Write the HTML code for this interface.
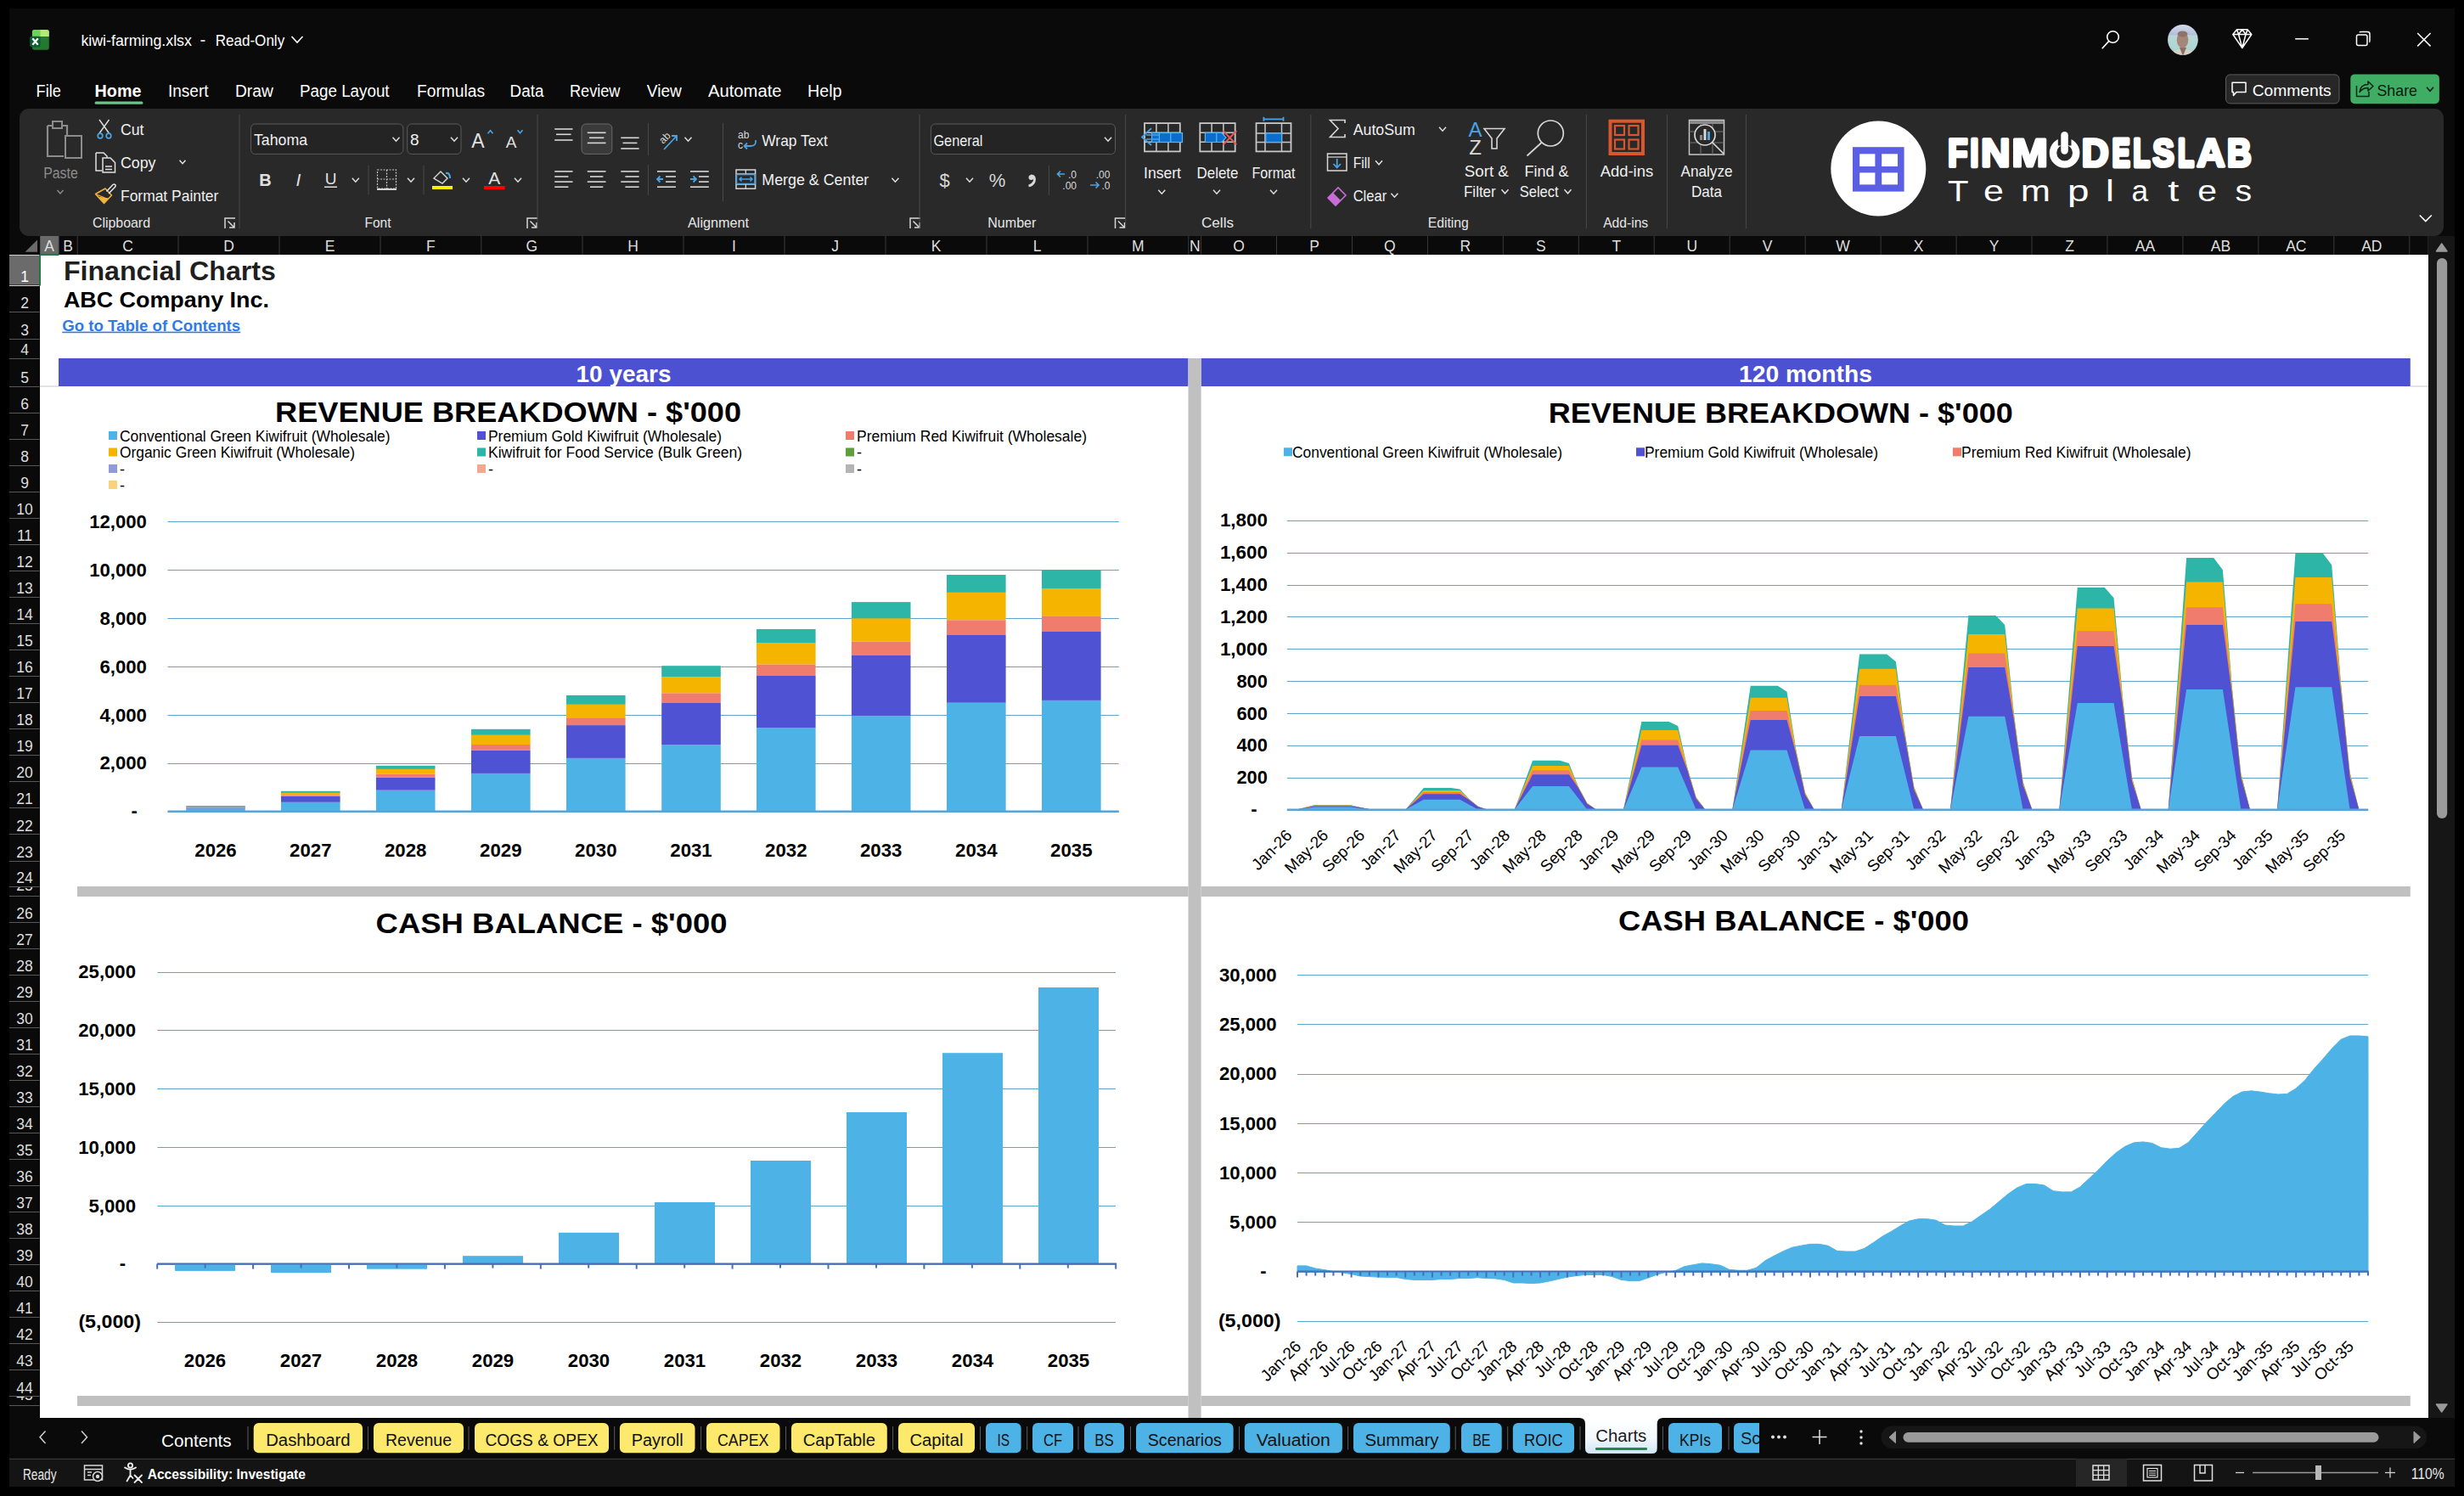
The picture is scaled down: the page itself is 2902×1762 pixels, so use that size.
<!DOCTYPE html>
<html><head><meta charset="utf-8"><title>kiwi-farming.xlsx - Charts</title>
<style>
html,body{margin:0;padding:0;background:#000;}
body{width:2902px;height:1762px;overflow:hidden;position:relative;font-family:"Liberation Sans",sans-serif;}
.blk{position:absolute;}
svg{position:absolute;left:0;top:0;}
text{font-family:"Liberation Sans",sans-serif;}
</style></head>
<body>
<div class="blk" style="left:11px;top:10px;width:2880px;height:1741px;background:#0a0a0a"></div>
<div class="blk" style="left:47px;top:300px;width:2813px;height:1370px;background:#ffffff"></div>
<svg width="2902" height="1762" viewBox="0 0 2902 1762">
<defs><clipPath id="xl"><rect x="37.9" y="34.9" width="19.9" height="23.8" rx="2.6"/></clipPath></defs>
<g clip-path="url(#xl)"><rect x="37" y="34" width="22" height="26" fill="#24782F"/><rect x="37" y="34" width="11" height="9" fill="#6CD35C"/><rect x="47.5" y="34" width="11" height="9" fill="#B6E874"/></g>
<rect x="35.2" y="42.7" width="12.4" height="12.7" fill="#0E5C33" rx="1.8"/>
<path d="M38.3,45.2 L44.8,52.8 M44.8,45.2 L38.3,52.8" stroke="#f4fff6" stroke-width="2.3"/>
<text x="95.4" y="54.4" font-size="18.5" fill="#ffffff" textLength="130.5" lengthAdjust="spacingAndGlyphs">kiwi-farming.xlsx</text>
<rect x="236.4" y="47.2" width="5.1" height="1.6" fill="#ffffff"/>
<text x="253.7" y="54.4" font-size="18.5" fill="#ffffff" textLength="81.5" lengthAdjust="spacingAndGlyphs">Read-Only</text>
<polyline points="343.5,43.0 350.0,50.0 356.5,43.0" fill="none" stroke="#ffffff" stroke-width="1.6"/>
<circle cx="2488.5" cy="43.5" r="6.8" fill="none" stroke="#ffffff" stroke-width="1.6"/>
<line x1="2483.6" y1="48.6" x2="2475.7" y2="57.2" stroke="#ffffff" stroke-width="1.6"/>
<defs><clipPath id="av"><circle cx="2570.9" cy="46.9" r="17.9"/></clipPath><linearGradient id="avg" x1="0" y1="0" x2="0" y2="1"><stop offset="0" stop-color="#d6dbea"/><stop offset="0.33" stop-color="#b3c0dc"/><stop offset="0.38" stop-color="#b9d8d8"/><stop offset="1" stop-color="#a6d2cc"/></linearGradient></defs>
<g clip-path="url(#av)"><rect x="2552" y="28" width="38" height="38" fill="url(#avg)"/><ellipse cx="2571" cy="68" rx="17" ry="10" fill="#d9d0c6"/><path d="M2567,56 L2571,66 L2575,56 Z" fill="#8c6f64"/><ellipse cx="2570.5" cy="47" rx="6.8" ry="9.5" fill="#a5877a"/><ellipse cx="2570.5" cy="40" rx="6" ry="3.5" fill="#8e7468"/></g>
<path d="M2629.8,40.5 L2634.5,34.8 H2647 L2651.8,40.5 L2640.8,56.5 Z M2629.8,40.5 H2651.8 M2636.5,40.5 L2640.8,56.5 L2645,40.5 M2634.5,34.8 L2636.5,40.5 L2640.8,34.8 L2645,40.5 L2647,34.8" fill="none" stroke="#ffffff" stroke-width="1.5" stroke-linejoin="round"/>
<line x1="2703.2" y1="45.8" x2="2718.8" y2="45.8" stroke="#ffffff" stroke-width="1.5"/>
<rect x="2775.5" y="41" width="12.5" height="12.5" rx="2" fill="none" stroke="#ffffff" stroke-width="1.5"/><path d="M2779,38.2 Q2779,37.5 2781,37.5 H2788.5 Q2791,37.5 2791,40 V47.5 Q2791,49.5 2790.3,49.5" fill="none" stroke="#ffffff" stroke-width="1.5"/>
<line x1="2847.2" y1="39.0" x2="2862.6" y2="54.4" stroke="#ffffff" stroke-width="1.5"/>
<line x1="2862.6" y1="39.0" x2="2847.2" y2="54.4" stroke="#ffffff" stroke-width="1.5"/>
<rect x="2621.5" y="87.9" width="133.5" height="34" rx="5" fill="#272727" stroke="#5c5c5c" stroke-width="1"/>
<path d="M2629,97.3 H2645 V108.5 H2634 L2630.5,112.5 V108.5 H2629 Z" fill="none" stroke="#ffffff" stroke-width="1.5" stroke-linejoin="round"/>
<text x="2652.7" y="113.0" font-size="19" fill="#ffffff" textLength="93.0" lengthAdjust="spacingAndGlyphs">Comments</text>
<rect x="2768.3" y="87.4" width="104.6" height="34.9" rx="5" fill="#3FAE64"/>
<path d="M2775.5,101 V113.5 H2790 V108 M2779,108.5 Q2780,99.5 2789,99.5 V96 L2795,101.5 L2789,107 V103.5 Q2782.5,103.5 2779,108.5 Z" fill="none" stroke="#0c2414" stroke-width="1.5" stroke-linejoin="round"/>
<text x="2799.5" y="113.0" font-size="19" fill="#0c1a10" textLength="47.5" lengthAdjust="spacingAndGlyphs">Share</text>
<polyline points="2858.0,102.8 2862.0,107.2 2866.0,102.8" fill="none" stroke="#0c1a10" stroke-width="1.6"/>
<text x="42.6" y="113.6" font-size="19.5" fill="#ffffff" textLength="29.2" lengthAdjust="spacingAndGlyphs">File</text>
<text x="111.6" y="113.6" font-size="19.5" font-weight="bold" fill="#ffffff" textLength="54.8" lengthAdjust="spacingAndGlyphs">Home</text>
<text x="198.0" y="113.6" font-size="19.5" fill="#ffffff" textLength="47.5" lengthAdjust="spacingAndGlyphs">Insert</text>
<text x="277.0" y="113.6" font-size="19.5" fill="#ffffff" textLength="44.8" lengthAdjust="spacingAndGlyphs">Draw</text>
<text x="353.0" y="113.6" font-size="19.5" fill="#ffffff" textLength="105.6" lengthAdjust="spacingAndGlyphs">Page Layout</text>
<text x="491.0" y="113.6" font-size="19.5" fill="#ffffff" textLength="80.0" lengthAdjust="spacingAndGlyphs">Formulas</text>
<text x="600.6" y="113.6" font-size="19.5" fill="#ffffff" textLength="39.8" lengthAdjust="spacingAndGlyphs">Data</text>
<text x="670.9" y="113.6" font-size="19.5" fill="#ffffff" textLength="59.6" lengthAdjust="spacingAndGlyphs">Review</text>
<text x="761.8" y="113.6" font-size="19.5" fill="#ffffff" textLength="41.0" lengthAdjust="spacingAndGlyphs">View</text>
<text x="834.0" y="113.6" font-size="19.5" fill="#ffffff" textLength="86.5" lengthAdjust="spacingAndGlyphs">Automate</text>
<text x="951.0" y="113.6" font-size="19.5" fill="#ffffff" textLength="40.5" lengthAdjust="spacingAndGlyphs">Help</text>
<rect x="111.6" y="119.5" width="56.8" height="3.3" fill="#6BC48A" rx="1.5"/>
<rect x="23" y="128" width="2855" height="150" rx="11" fill="#292929"/>
<path d="M56,148 H62 M73,148 H79 V160" fill="none" stroke="#8c8c8c" stroke-width="2.2"/><path d="M56,148 V184 H75" fill="none" stroke="#8c8c8c" stroke-width="2.2"/><path d="M62,143 H73 V151 H62 Z" fill="none" stroke="#8c8c8c" stroke-width="2"/><rect x="77" y="160" width="19" height="26" fill="#292929" stroke="#8c8c8c" stroke-width="2"/>
<text x="71.5" y="209.8" font-size="18" fill="#8c8c8c" text-anchor="middle" textLength="40.6" lengthAdjust="spacingAndGlyphs">Paste</text>
<polyline points="67.5,224.0 71.0,228.0 74.5,224.0" fill="none" stroke="#8c8c8c" stroke-width="1.4"/>
<path d="M117,141 L128.5,157 M128.5,141 L117,157" stroke="#e0e0e0" stroke-width="1.4" fill="none"/><circle cx="118" cy="160" r="2.8" fill="none" stroke="#4BA3E3" stroke-width="1.7"/><circle cx="128" cy="160" r="2.8" fill="none" stroke="#4BA3E3" stroke-width="1.7"/>
<text x="142.0" y="159.3" font-size="18.5" fill="#f0f0f0" textLength="27.5" lengthAdjust="spacingAndGlyphs">Cut</text>
<path d="M113,180 H122 L126,184 V188 M113,180 V201 H120" fill="none" stroke="#e0e0e0" stroke-width="1.5"/><path d="M121,186 H130 L135.5,191.5 V203 H121 Z M124,196 H132 M124,199.5 H132" fill="#292929" stroke="#e0e0e0" stroke-width="1.5"/>
<text x="142.0" y="197.8" font-size="18.5" fill="#f0f0f0" textLength="41.5" lengthAdjust="spacingAndGlyphs">Copy</text>
<polyline points="211.5,188.7 215.0,192.7 218.5,188.7" fill="none" stroke="#e0e0e0" stroke-width="1.5"/>
<path d="M112.5,228.5 L124,222 L131.5,230 L122.5,239.5 Z" fill="none" stroke="#F2B33D" stroke-width="1.5" stroke-linejoin="round"/><path d="M115,231.5 L128.5,233.5 L122.5,239.5 Z" fill="#F2B33D"/><path d="M113.5,229 L123.5,233" stroke="#F2B33D" stroke-width="1.2"/><path d="M125.5,225.5 L133,217.5 Q134.5,216.3 135.7,217.6 Q136.8,218.8 135.5,220.2 L128,228" fill="none" stroke="#e6e6e6" stroke-width="1.5" stroke-linejoin="round"/>
<text x="142.0" y="237.0" font-size="18.5" fill="#f0f0f0" textLength="115.3" lengthAdjust="spacingAndGlyphs">Format Painter</text>
<text x="143.0" y="268.3" font-size="17" fill="#e6e6e6" text-anchor="middle" textLength="68.0" lengthAdjust="spacingAndGlyphs">Clipboard</text>
<path d="M265,269 V257 H277" fill="none" stroke="#d8d8d8" stroke-width="1.5"/><path d="M268.5,260.5 L276,268 M276,262 V268 H270" fill="none" stroke="#d8d8d8" stroke-width="1.5"/>
<line x1="282.0" y1="135.0" x2="282.0" y2="269.0" stroke="#4a4a4a" stroke-width="1"/>
<rect x="295.5" y="146" width="179.3" height="35.4" rx="5" fill="#242424" stroke="#5a5a5a" stroke-width="1"/>
<text x="299.0" y="171.0" font-size="19" fill="#f0f0f0" textLength="63.0" lengthAdjust="spacingAndGlyphs">Tahoma</text>
<polyline points="462.5,161.8 466.5,166.2 470.5,161.8" fill="none" stroke="#e0e0e0" stroke-width="1.5"/>
<rect x="479.7" y="146" width="63.3" height="35.4" rx="5" fill="#242424" stroke="#5a5a5a" stroke-width="1"/>
<text x="483.0" y="171.0" font-size="19" fill="#f0f0f0">8</text>
<polyline points="531.0,161.8 535.0,166.2 539.0,161.8" fill="none" stroke="#e0e0e0" stroke-width="1.5"/>
<text x="563.0" y="174.0" font-size="23" fill="#e0e0e0" text-anchor="middle">A</text>
<polyline points="574.5,157.2 577.5,153.8 580.5,157.2" fill="none" stroke="#4BA3E3" stroke-width="1.6"/>
<text x="602.0" y="174.0" font-size="19" fill="#e0e0e0" text-anchor="middle">A</text>
<polyline points="609.5,153.2 612.5,156.8 615.5,153.2" fill="none" stroke="#4BA3E3" stroke-width="1.6"/>
<text x="312.5" y="219.0" font-size="20" font-weight="bold" fill="#e0e0e0" text-anchor="middle">B</text>
<text x="351.5" y="219.0" font-size="21" fill="#e0e0e0" text-anchor="middle" font-style="italic" font-family="Liberation Serif">I</text>
<text x="389.6" y="217.0" font-size="19" fill="#e0e0e0" text-anchor="middle">U</text>
<rect x="382.0" y="219.5" width="15.0" height="1.5" fill="#e0e0e0"/>
<polyline points="414.8,209.8 418.8,214.2 422.8,209.8" fill="none" stroke="#e0e0e0" stroke-width="1.5"/>
<line x1="434.0" y1="195.0" x2="434.0" y2="229.0" stroke="#4a4a4a" stroke-width="1"/>
<rect x="444.5" y="200" width="22" height="22" fill="none" stroke="#c8c8c8" stroke-width="1.2" stroke-dasharray="2,1.5"/><path d="M455.5,200 V222 M444.5,211 H466.5" stroke="#c8c8c8" stroke-width="1.2" stroke-dasharray="2,1.5"/><path d="M444,223 H467" stroke="#e8e8e8" stroke-width="1.8"/>
<polyline points="480.0,209.8 484.0,214.2 488.0,209.8" fill="none" stroke="#e0e0e0" stroke-width="1.5"/>
<line x1="499.0" y1="195.0" x2="499.0" y2="229.0" stroke="#4a4a4a" stroke-width="1"/>
<path d="M511,210 L519,202 L527,210 L521,216 Z" fill="none" stroke="#d8d8d8" stroke-width="1.4"/><path d="M525,204 Q530,203 530,210" fill="none" stroke="#4BA3E3" stroke-width="2"/>
<rect x="509.0" y="219.0" width="24.0" height="4.0" fill="#FFF200"/>
<polyline points="545.0,209.8 549.0,214.2 553.0,209.8" fill="none" stroke="#e0e0e0" stroke-width="1.5"/>
<text x="582.3" y="217.0" font-size="21" fill="#e0e0e0" text-anchor="middle">A</text>
<rect x="570.0" y="219.0" width="24.6" height="4.0" fill="#FF0000"/>
<polyline points="606.0,209.8 610.0,214.2 614.0,209.8" fill="none" stroke="#e0e0e0" stroke-width="1.5"/>
<text x="445.0" y="268.3" font-size="17" fill="#e6e6e6" text-anchor="middle" textLength="31.0" lengthAdjust="spacingAndGlyphs">Font</text>
<path d="M621,269 V257 H633" fill="none" stroke="#d8d8d8" stroke-width="1.5"/><path d="M624.5,260.5 L632,268 M632,262 V268 H626" fill="none" stroke="#d8d8d8" stroke-width="1.5"/>
<line x1="633.0" y1="135.0" x2="633.0" y2="269.0" stroke="#4a4a4a" stroke-width="1"/>
<line x1="653.2" y1="152.0" x2="674.5" y2="152.0" stroke="#d8d8d8" stroke-width="1.6"/><line x1="655.0" y1="158.3" x2="672.5" y2="158.3" stroke="#d8d8d8" stroke-width="1.6"/><line x1="653.2" y1="165.0" x2="674.5" y2="165.0" stroke="#d8d8d8" stroke-width="1.6"/>
<rect x="685" y="146" width="35.8" height="35.4" rx="5" fill="#3a3a3a" stroke="#6a6a6a" stroke-width="1"/>
<line x1="691.8" y1="156.3" x2="713.5" y2="156.3" stroke="#d8d8d8" stroke-width="1.6"/><line x1="694.0" y1="162.3" x2="711.3" y2="162.3" stroke="#d8d8d8" stroke-width="1.6"/><line x1="691.8" y1="168.4" x2="713.5" y2="168.4" stroke="#d8d8d8" stroke-width="1.6"/>
<line x1="731.3" y1="162.3" x2="752.6" y2="162.3" stroke="#d8d8d8" stroke-width="1.6"/><line x1="733.5" y1="168.4" x2="750.4" y2="168.4" stroke="#d8d8d8" stroke-width="1.6"/><line x1="731.3" y1="175.0" x2="752.6" y2="175.0" stroke="#d8d8d8" stroke-width="1.6"/>
<line x1="763.4" y1="145.0" x2="763.4" y2="183.0" stroke="#4a4a4a" stroke-width="1"/>
<text x="781" y="170" font-size="12" fill="#d8d8d8" transform="rotate(-45 781 170)">ab</text><path d="M782,176 L797,160 M791,160 H797 V166" fill="none" stroke="#4BA3E3" stroke-width="1.8"/>
<polyline points="806.5,161.8 810.5,166.2 814.5,161.8" fill="none" stroke="#e0e0e0" stroke-width="1.5"/>
<line x1="851.5" y1="145.0" x2="851.5" y2="237.0" stroke="#4a4a4a" stroke-width="1"/>
<text x="869" y="163" font-size="12" fill="#d8d8d8">ab</text><text x="869" y="175" font-size="12" fill="#d8d8d8">c</text><path d="M890,165 Q891,172 884,172 H877 M880,168.5 L876.5,172 L880,175.5" fill="none" stroke="#4BA3E3" stroke-width="1.8"/>
<text x="897.3" y="171.5" font-size="19" fill="#f0f0f0" textLength="77.5" lengthAdjust="spacingAndGlyphs">Wrap Text</text>
<line x1="653.2" y1="201.9" x2="674.5" y2="201.9" stroke="#d8d8d8" stroke-width="1.6"/><line x1="653.2" y1="208.0" x2="669.4" y2="208.0" stroke="#d8d8d8" stroke-width="1.6"/><line x1="653.2" y1="214.1" x2="674.5" y2="214.1" stroke="#d8d8d8" stroke-width="1.6"/><line x1="653.2" y1="220.2" x2="669.4" y2="220.2" stroke="#d8d8d8" stroke-width="1.6"/>
<line x1="691.8" y1="201.9" x2="713.5" y2="201.9" stroke="#d8d8d8" stroke-width="1.6"/><line x1="695.0" y1="208.0" x2="710.3" y2="208.0" stroke="#d8d8d8" stroke-width="1.6"/><line x1="691.8" y1="214.1" x2="713.5" y2="214.1" stroke="#d8d8d8" stroke-width="1.6"/><line x1="695.0" y1="220.2" x2="710.3" y2="220.2" stroke="#d8d8d8" stroke-width="1.6"/>
<line x1="731.3" y1="201.9" x2="752.6" y2="201.9" stroke="#d8d8d8" stroke-width="1.6"/><line x1="736.4" y1="208.0" x2="752.6" y2="208.0" stroke="#d8d8d8" stroke-width="1.6"/><line x1="731.3" y1="214.1" x2="752.6" y2="214.1" stroke="#d8d8d8" stroke-width="1.6"/><line x1="736.4" y1="220.2" x2="752.6" y2="220.2" stroke="#d8d8d8" stroke-width="1.6"/>
<line x1="763.4" y1="194.0" x2="763.4" y2="230.0" stroke="#4a4a4a" stroke-width="1"/>
<line x1="774.0" y1="201.9" x2="795.9" y2="201.9" stroke="#d8d8d8" stroke-width="1.6"/><line x1="784.0" y1="208.0" x2="795.9" y2="208.0" stroke="#d8d8d8" stroke-width="1.6"/><line x1="784.0" y1="214.1" x2="795.9" y2="214.1" stroke="#d8d8d8" stroke-width="1.6"/><line x1="774.0" y1="220.2" x2="795.9" y2="220.2" stroke="#d8d8d8" stroke-width="1.6"/>
<path d="M781,211 H774 M777.5,207.5 L774,211 L777.5,214.5" fill="none" stroke="#4BA3E3" stroke-width="1.8"/>
<line x1="813.0" y1="201.9" x2="834.8" y2="201.9" stroke="#d8d8d8" stroke-width="1.6"/><line x1="823.0" y1="208.0" x2="834.8" y2="208.0" stroke="#d8d8d8" stroke-width="1.6"/><line x1="823.0" y1="214.1" x2="834.8" y2="214.1" stroke="#d8d8d8" stroke-width="1.6"/><line x1="813.0" y1="220.2" x2="834.8" y2="220.2" stroke="#d8d8d8" stroke-width="1.6"/>
<path d="M813,211 H820 M816.5,207.5 L820,211 L816.5,214.5" fill="none" stroke="#4BA3E3" stroke-width="1.8"/>
<rect x="867" y="200" width="22.6" height="22.2" fill="none" stroke="#d8d8d8" stroke-width="1.5"/><path d="M867,205 H889.6 M867,217 H889.6 M878.3,200 V205 M878.3,217 V222" stroke="#d8d8d8" stroke-width="1.3"/><rect x="867.5" y="205.5" width="21.6" height="11" fill="none" stroke="#4BA3E3" stroke-width="1.6"/><path d="M871,211 H886 M873.5,208.5 L871,211 L873.5,213.5 M883.5,208.5 L886,211 L883.5,213.5" fill="none" stroke="#4BA3E3" stroke-width="1.5"/>
<text x="897.3" y="218.0" font-size="19" fill="#f0f0f0" textLength="126.0" lengthAdjust="spacingAndGlyphs">Merge &amp; Center</text>
<polyline points="1050.4,209.8 1054.4,214.2 1058.4,209.8" fill="none" stroke="#e0e0e0" stroke-width="1.5"/>
<text x="846.0" y="268.3" font-size="17" fill="#e6e6e6" text-anchor="middle" textLength="72.0" lengthAdjust="spacingAndGlyphs">Alignment</text>
<path d="M1072,269 V257 H1084" fill="none" stroke="#d8d8d8" stroke-width="1.5"/><path d="M1075.5,260.5 L1083,268 M1083,262 V268 H1077" fill="none" stroke="#d8d8d8" stroke-width="1.5"/>
<line x1="1083.0" y1="135.0" x2="1083.0" y2="269.0" stroke="#4a4a4a" stroke-width="1"/>
<rect x="1096.4" y="146" width="217.1" height="35.6" rx="5" fill="#242424" stroke="#5a5a5a" stroke-width="1"/>
<text x="1099.4" y="171.5" font-size="19" fill="#f0f0f0" textLength="58.0" lengthAdjust="spacingAndGlyphs">General</text>
<polyline points="1301.0,161.8 1305.0,166.2 1309.0,161.8" fill="none" stroke="#e0e0e0" stroke-width="1.5"/>
<text x="1112.6" y="220.0" font-size="22" fill="#d8d8d8" text-anchor="middle">$</text>
<polyline points="1138.0,209.8 1142.0,214.2 1146.0,209.8" fill="none" stroke="#e0e0e0" stroke-width="1.5"/>
<text x="1174.5" y="220.0" font-size="22" fill="#d8d8d8" text-anchor="middle">%</text>
<path d="M1214,207 Q1220,207 1218,214 Q1216,218 1211.5,219" fill="none" stroke="#d8d8d8" stroke-width="2.8"/><circle cx="1214.5" cy="209" r="3" fill="#d8d8d8"/>
<line x1="1235.4" y1="195.0" x2="1235.4" y2="230.0" stroke="#4a4a4a" stroke-width="1"/>
<text x="1268" y="210" font-size="12" fill="#d8d8d8" text-anchor="end">.0</text><text x="1268" y="223" font-size="12" fill="#d8d8d8" text-anchor="end">.00</text><path d="M1254,205 H1245.5 M1249,201.5 L1245.5,205 L1249,208.5" fill="none" stroke="#4BA3E3" stroke-width="1.7"/>
<text x="1307.4" y="210" font-size="12" fill="#d8d8d8" text-anchor="end">.00</text><text x="1307.4" y="223" font-size="12" fill="#d8d8d8" text-anchor="end">.0</text><path d="M1284,218 H1294 M1290.5,214.5 L1294,218 L1290.5,221.5" fill="none" stroke="#4BA3E3" stroke-width="1.7"/>
<text x="1191.8" y="268.3" font-size="17" fill="#e6e6e6" text-anchor="middle" textLength="57.0" lengthAdjust="spacingAndGlyphs">Number</text>
<path d="M1313.5,269 V257 H1325.5" fill="none" stroke="#d8d8d8" stroke-width="1.5"/><path d="M1317.0,260.5 L1324.5,268 M1324.5,262 V268 H1318.5" fill="none" stroke="#d8d8d8" stroke-width="1.5"/>
<line x1="1325.7" y1="135.0" x2="1325.7" y2="269.0" stroke="#4a4a4a" stroke-width="1"/>
<rect x="1348" y="145.1" width="41.8" height="33.3" fill="none" stroke="#c8c8c8" stroke-width="1.8"/><line x1="1361.9" y1="145.1" x2="1361.9" y2="178.4" stroke="#c8c8c8" stroke-width="1.5"/><line x1="1348.0" y1="156.2" x2="1389.8" y2="156.2" stroke="#c8c8c8" stroke-width="1.5"/><line x1="1375.9" y1="145.1" x2="1375.9" y2="178.4" stroke="#c8c8c8" stroke-width="1.5"/><line x1="1348.0" y1="167.3" x2="1389.8" y2="167.3" stroke="#c8c8c8" stroke-width="1.5"/>
<rect x="1356.5" y="156.5" width="36" height="11" fill="#0B6ECF" stroke="#5AB4F0" stroke-width="1.2"/>
<line x1="1365.4" y1="156.5" x2="1365.4" y2="167.5" stroke="#5AB4F0" stroke-width="1.2"/><line x1="1378.8" y1="156.5" x2="1378.8" y2="167.5" stroke="#5AB4F0" stroke-width="1.2"/>
<path d="M1365,159 H1350 M1365,164 H1350" stroke="#4BA3E3" stroke-width="1.3"/><path d="M1356,151.2 L1345,161.5 L1356,171" fill="none" stroke="#4BA3E3" stroke-width="1.8"/>
<text x="1369.0" y="209.6" font-size="19" fill="#f0f0f0" text-anchor="middle" textLength="44.0" lengthAdjust="spacingAndGlyphs">Insert</text>
<polyline points="1364.3,223.8 1368.3,228.2 1372.3,223.8" fill="none" stroke="#e0e0e0" stroke-width="1.5"/>
<rect x="1413.3" y="145.1" width="41.4" height="33.3" fill="none" stroke="#c8c8c8" stroke-width="1.8"/><line x1="1427.1" y1="145.1" x2="1427.1" y2="178.4" stroke="#c8c8c8" stroke-width="1.5"/><line x1="1413.3" y1="156.2" x2="1454.7" y2="156.2" stroke="#c8c8c8" stroke-width="1.5"/><line x1="1440.9" y1="145.1" x2="1440.9" y2="178.4" stroke="#c8c8c8" stroke-width="1.5"/><line x1="1413.3" y1="167.3" x2="1454.7" y2="167.3" stroke="#c8c8c8" stroke-width="1.5"/>
<path d="M1419.4,156.5 H1439 L1444,162 L1439,167.5 H1419.4 Z" fill="#0B6ECF" stroke="#5AB4F0" stroke-width="1.2"/>
<line x1="1432.8" y1="156.5" x2="1432.8" y2="167.5" stroke="#5AB4F0" stroke-width="1.2"/>
<path d="M1440.5,154 L1456.3,170.5 M1456.3,154 L1440.5,170.5" stroke="#E05A5A" stroke-width="2"/>
<text x="1434.0" y="209.6" font-size="19" fill="#f0f0f0" text-anchor="middle" textLength="49.0" lengthAdjust="spacingAndGlyphs">Delete</text>
<polyline points="1429.0,223.8 1433.0,228.2 1437.0,223.8" fill="none" stroke="#e0e0e0" stroke-width="1.5"/>
<rect x="1479.5" y="145.1" width="41" height="33.3" fill="none" stroke="#c8c8c8" stroke-width="1.8"/><line x1="1490.0" y1="145.1" x2="1490.0" y2="178.4" stroke="#c8c8c8" stroke-width="1.5"/><line x1="1509.5" y1="145.1" x2="1509.5" y2="178.4" stroke="#c8c8c8" stroke-width="1.5"/><line x1="1479.5" y1="156.9" x2="1520.5" y2="156.9" stroke="#c8c8c8" stroke-width="1.5"/><line x1="1479.5" y1="167.5" x2="1520.5" y2="167.5" stroke="#c8c8c8" stroke-width="1.5"/>
<rect x="1490.8" y="157" width="18.7" height="10.5" fill="#0B6ECF" stroke="#5AB4F0" stroke-width="1.2"/>
<path d="M1488.4,140.3 H1511.5 M1488.4,137.8 V142.7 M1511.5,137.8 V142.7" stroke="#4BA3E3" stroke-width="1.8"/>
<text x="1500.0" y="209.6" font-size="19" fill="#f0f0f0" text-anchor="middle" textLength="51.0" lengthAdjust="spacingAndGlyphs">Format</text>
<polyline points="1496.0,223.8 1500.0,228.2 1504.0,223.8" fill="none" stroke="#e0e0e0" stroke-width="1.5"/>
<text x="1434.0" y="268.3" font-size="17" fill="#e6e6e6" text-anchor="middle" textLength="38.0" lengthAdjust="spacingAndGlyphs">Cells</text>
<line x1="1543.8" y1="135.0" x2="1543.8" y2="269.0" stroke="#4a4a4a" stroke-width="1"/>
<path d="M1584,145 V141.5 H1566.5 L1576,151.5 L1566.5,161.5 H1584 V158" fill="none" stroke="#d8d8d8" stroke-width="1.6"/>
<text x="1593.7" y="159.3" font-size="18.5" fill="#f0f0f0" textLength="73.0" lengthAdjust="spacingAndGlyphs">AutoSum</text>
<polyline points="1695.0,149.8 1699.0,154.2 1703.0,149.8" fill="none" stroke="#e0e0e0" stroke-width="1.5"/>
<rect x="1563.5" y="181" width="22.5" height="20" fill="none" stroke="#d8d8d8" stroke-width="1.5"/><path d="M1563.5,185 H1586" stroke="#d8d8d8" stroke-width="1.2"/><path d="M1574.7,187 V197 M1570.5,193 L1574.7,197.5 L1579,193" fill="none" stroke="#4BA3E3" stroke-width="1.8"/>
<text x="1593.7" y="197.8" font-size="18.5" fill="#f0f0f0" textLength="20.0" lengthAdjust="spacingAndGlyphs">Fill</text>
<polyline points="1620.0,189.2 1624.0,193.8 1628.0,189.2" fill="none" stroke="#e0e0e0" stroke-width="1.5"/>
<path d="M1564,233 L1576,221 L1585,230 L1573,242 Z" fill="none" stroke="#C86DD7" stroke-width="1.6"/><path d="M1564,233 L1570,227 L1579,236 L1573,242 Z" fill="#C86DD7"/>
<text x="1593.7" y="236.5" font-size="18.5" fill="#f0f0f0" textLength="39.5" lengthAdjust="spacingAndGlyphs">Clear</text>
<polyline points="1638.4,227.8 1642.4,232.2 1646.4,227.8" fill="none" stroke="#e0e0e0" stroke-width="1.5"/>
<text x="1737.5" y="161.0" font-size="24" fill="#4BA3E3" text-anchor="middle">A</text>
<text x="1737.5" y="181.5" font-size="24" fill="#d8d8d8" text-anchor="middle">Z</text>
<path d="M1748,151.5 H1772 L1763,163 V175 H1757 V163 Z" fill="none" stroke="#d8d8d8" stroke-width="1.6"/>
<text x="1750.8" y="207.5" font-size="18.5" fill="#f0f0f0" text-anchor="middle" textLength="52.0" lengthAdjust="spacingAndGlyphs">Sort &amp;</text>
<text x="1724.0" y="232.0" font-size="18.5" fill="#f0f0f0" textLength="37.7" lengthAdjust="spacingAndGlyphs">Filter</text>
<polyline points="1768.5,223.2 1772.5,227.8 1776.5,223.2" fill="none" stroke="#e0e0e0" stroke-width="1.5"/>
<circle cx="1826.3" cy="157" r="15" fill="none" stroke="#d8d8d8" stroke-width="1.7"/><path d="M1815.5,168 L1798.5,183.5" stroke="#d8d8d8" stroke-width="1.7"/>
<text x="1821.4" y="207.5" font-size="18.5" fill="#f0f0f0" text-anchor="middle" textLength="52.0" lengthAdjust="spacingAndGlyphs">Find &amp;</text>
<text x="1789.7" y="232.0" font-size="18.5" fill="#f0f0f0" textLength="46.0" lengthAdjust="spacingAndGlyphs">Select</text>
<polyline points="1842.5,223.2 1846.5,227.8 1850.5,223.2" fill="none" stroke="#e0e0e0" stroke-width="1.5"/>
<text x="1705.7" y="268.3" font-size="17" fill="#e6e6e6" text-anchor="middle" textLength="48.0" lengthAdjust="spacingAndGlyphs">Editing</text>
<line x1="1868.4" y1="135.0" x2="1868.4" y2="269.0" stroke="#4a4a4a" stroke-width="1"/>
<rect x="1896.5" y="142.7" width="38.5" height="38.3" fill="none" stroke="#D9562E" stroke-width="4"/><rect x="1902" y="148" width="11" height="11" fill="none" stroke="#D9562E" stroke-width="2.2"/><rect x="1918.5" y="148" width="11" height="11" fill="none" stroke="#D9562E" stroke-width="2.2"/><rect x="1902" y="164.5" width="11" height="11" fill="none" stroke="#D9562E" stroke-width="2.2"/><rect x="1918.5" y="164.5" width="11" height="11" fill="none" stroke="#D9562E" stroke-width="2.2"/>
<text x="1915.9" y="208.0" font-size="18.5" fill="#f0f0f0" text-anchor="middle" textLength="62.5" lengthAdjust="spacingAndGlyphs">Add-ins</text>
<text x="1914.7" y="268.3" font-size="17" fill="#e6e6e6" text-anchor="middle" textLength="53.0" lengthAdjust="spacingAndGlyphs">Add-ins</text>
<line x1="1963.4" y1="135.0" x2="1963.4" y2="269.0" stroke="#4a4a4a" stroke-width="1"/>
<rect x="1989.5" y="141.5" width="41" height="40.5" fill="none" stroke="#c8c8c8" stroke-width="1.5"/><rect x="1990" y="142" width="40" height="4" fill="#8a8a8a"/><path d="M1989.5,155 H2030.5 M1989.5,168 H2030.5 M2003,146 V182 M2017,146 V182" stroke="#777" stroke-width="1"/><circle cx="2008" cy="159" r="12" fill="#292929" stroke="#d8d8d8" stroke-width="1.7"/><path d="M2016.5,167.5 L2030,181" stroke="#d8d8d8" stroke-width="1.7"/><rect x="2002" y="159" width="3" height="6" fill="#8a8a8a"/><rect x="2006.5" y="152" width="3" height="13" fill="#d8d8d8"/><rect x="2011" y="155" width="3" height="10" fill="#4BA3E3"/>
<text x="2010.0" y="208.0" font-size="18.5" fill="#f0f0f0" text-anchor="middle" textLength="61.0" lengthAdjust="spacingAndGlyphs">Analyze</text>
<text x="2010.0" y="232.0" font-size="18.5" fill="#f0f0f0" text-anchor="middle" textLength="36.0" lengthAdjust="spacingAndGlyphs">Data</text>
<line x1="2056.4" y1="135.0" x2="2056.4" y2="269.0" stroke="#4a4a4a" stroke-width="1"/>
<circle cx="2212.3" cy="198.6" r="56" fill="#ffffff"/>
<rect x="2182.0" y="173.2" width="60.6" height="52.4" fill="#5B5FE3"/>
<rect x="2190.2" y="181.3" width="18.2" height="14.7" fill="#ffffff"/>
<rect x="2190.2" y="203.4" width="18.2" height="14.0" fill="#ffffff"/>
<rect x="2216.2" y="181.3" width="18.8" height="14.7" fill="#ffffff"/>
<rect x="2216.2" y="203.4" width="18.8" height="14.0" fill="#ffffff"/>
<text x="0" y="0" font-size="46.8" font-weight="bold" fill="#fff" stroke="#fff" stroke-width="4.20" stroke-linejoin="round" transform="translate(2294.24,196.2) scale(0.809,1)">F</text>
<text x="0" y="0" font-size="46.8" font-weight="bold" fill="#fff" stroke="#fff" stroke-width="4.52" stroke-linejoin="round" transform="translate(2320.41,196.2) scale(0.752,1)">I</text>
<text x="0" y="0" font-size="46.8" font-weight="bold" fill="#fff" stroke="#fff" stroke-width="3.33" stroke-linejoin="round" transform="translate(2332.99,196.2) scale(1.021,1)">N</text>
<text x="0" y="0" font-size="46.8" font-weight="bold" fill="#fff" stroke="#fff" stroke-width="3.10" stroke-linejoin="round" transform="translate(2369.37,196.2) scale(1.096,1)">M</text>
<text x="0" y="0" font-size="46.8" font-weight="bold" fill="#fff" stroke="#fff" stroke-width="3.60" stroke-linejoin="round" transform="translate(2451.73,196.2) scale(0.945,1)">D</text>
<text x="0" y="0" font-size="46.8" font-weight="bold" fill="#fff" stroke="#fff" stroke-width="5.11" stroke-linejoin="round" transform="translate(2487.68,196.2) scale(0.666,1)">E</text>
<text x="0" y="0" font-size="46.8" font-weight="bold" fill="#fff" stroke="#fff" stroke-width="4.94" stroke-linejoin="round" transform="translate(2512.60,196.2) scale(0.689,1)">L</text>
<text x="0" y="0" font-size="46.8" font-weight="bold" fill="#fff" stroke="#fff" stroke-width="4.17" stroke-linejoin="round" transform="translate(2535.25,196.2) scale(0.816,1)">S</text>
<text x="0" y="0" font-size="46.8" font-weight="bold" fill="#fff" stroke="#fff" stroke-width="5.22" stroke-linejoin="round" transform="translate(2565.22,196.2) scale(0.651,1)">L</text>
<text x="0" y="0" font-size="46.8" font-weight="bold" fill="#fff" stroke="#fff" stroke-width="3.44" stroke-linejoin="round" transform="translate(2587.14,196.2) scale(0.989,1)">A</text>
<text x="0" y="0" font-size="46.8" font-weight="bold" fill="#fff" stroke="#fff" stroke-width="4.01" stroke-linejoin="round" transform="translate(2623.12,196.2) scale(0.848,1)">B</text>
<circle cx="2431.6" cy="180" r="13.6" fill="none" stroke="#fff" stroke-width="8.4"/>
<rect x="2423.8" y="150" width="15.7" height="21.5" fill="#292929"/>
<rect x="2427.3" y="154.9" width="8.5" height="26.8" rx="4.25" fill="#fff"/>
<text x="0" y="0" font-size="35.5" fill="#fff" transform="translate(2294.00,237.3) scale(1.132,1)">T</text>
<text x="0" y="0" font-size="35.5" fill="#fff" transform="translate(2336.06,237.3) scale(1.212,1)">e</text>
<text x="0" y="0" font-size="35.5" fill="#fff" transform="translate(2379.98,237.3) scale(1.179,1)">m</text>
<text x="0" y="0" font-size="35.5" fill="#fff" transform="translate(2435.02,237.3) scale(1.290,1)">p</text>
<text x="0" y="0" font-size="35.5" fill="#fff" transform="translate(2480.11,237.3) scale(1.252,1)">l</text>
<text x="0" y="0" font-size="35.5" fill="#fff" transform="translate(2510.41,237.3) scale(0.994,1)">a</text>
<text x="0" y="0" font-size="35.5" fill="#fff" transform="translate(2553.29,237.3) scale(1.326,1)">t</text>
<text x="0" y="0" font-size="35.5" fill="#fff" transform="translate(2588.16,237.3) scale(1.151,1)">e</text>
<text x="0" y="0" font-size="35.5" fill="#fff" transform="translate(2632.52,237.3) scale(1.107,1)">s</text>
<polyline points="2849.8,253.5 2856.8,260.5 2863.8,253.5" fill="none" stroke="#ffffff" stroke-width="1.6"/>
<rect x="47.2" y="278.0" width="22.1" height="21.5" fill="#6a6a6a"/>
<rect x="47.2" y="298.8" width="22.3" height="2.2" fill="#217A45"/>
<line x1="69.3" y1="278.0" x2="69.3" y2="300.0" stroke="#3a3a3a" stroke-width="1"/>
<text x="58.1" y="296.0" font-size="17.5" fill="#dedede" text-anchor="middle">A</text>
<line x1="91.2" y1="278.0" x2="91.2" y2="300.0" stroke="#3a3a3a" stroke-width="1"/>
<text x="80.2" y="296.0" font-size="17.5" fill="#dedede" text-anchor="middle">B</text>
<line x1="210.0" y1="278.0" x2="210.0" y2="300.0" stroke="#3a3a3a" stroke-width="1"/>
<text x="150.6" y="296.0" font-size="17.5" fill="#dedede" text-anchor="middle">C</text>
<line x1="329.0" y1="278.0" x2="329.0" y2="300.0" stroke="#3a3a3a" stroke-width="1"/>
<text x="269.5" y="296.0" font-size="17.5" fill="#dedede" text-anchor="middle">D</text>
<line x1="448.0" y1="278.0" x2="448.0" y2="300.0" stroke="#3a3a3a" stroke-width="1"/>
<text x="388.5" y="296.0" font-size="17.5" fill="#dedede" text-anchor="middle">E</text>
<line x1="566.8" y1="278.0" x2="566.8" y2="300.0" stroke="#3a3a3a" stroke-width="1"/>
<text x="507.4" y="296.0" font-size="17.5" fill="#dedede" text-anchor="middle">F</text>
<line x1="686.0" y1="278.0" x2="686.0" y2="300.0" stroke="#3a3a3a" stroke-width="1"/>
<text x="626.4" y="296.0" font-size="17.5" fill="#dedede" text-anchor="middle">G</text>
<line x1="805.0" y1="278.0" x2="805.0" y2="300.0" stroke="#3a3a3a" stroke-width="1"/>
<text x="745.5" y="296.0" font-size="17.5" fill="#dedede" text-anchor="middle">H</text>
<line x1="924.0" y1="278.0" x2="924.0" y2="300.0" stroke="#3a3a3a" stroke-width="1"/>
<text x="864.5" y="296.0" font-size="17.5" fill="#dedede" text-anchor="middle">I</text>
<line x1="1043.0" y1="278.0" x2="1043.0" y2="300.0" stroke="#3a3a3a" stroke-width="1"/>
<text x="983.5" y="296.0" font-size="17.5" fill="#dedede" text-anchor="middle">J</text>
<line x1="1162.0" y1="278.0" x2="1162.0" y2="300.0" stroke="#3a3a3a" stroke-width="1"/>
<text x="1102.5" y="296.0" font-size="17.5" fill="#dedede" text-anchor="middle">K</text>
<line x1="1281.0" y1="278.0" x2="1281.0" y2="300.0" stroke="#3a3a3a" stroke-width="1"/>
<text x="1221.5" y="296.0" font-size="17.5" fill="#dedede" text-anchor="middle">L</text>
<line x1="1399.8" y1="278.0" x2="1399.8" y2="300.0" stroke="#3a3a3a" stroke-width="1"/>
<text x="1340.4" y="296.0" font-size="17.5" fill="#dedede" text-anchor="middle">M</text>
<line x1="1414.6" y1="278.0" x2="1414.6" y2="300.0" stroke="#3a3a3a" stroke-width="1"/>
<text x="1407.2" y="296.0" font-size="17.5" fill="#dedede" text-anchor="middle">N</text>
<line x1="1503.5" y1="278.0" x2="1503.5" y2="300.0" stroke="#3a3a3a" stroke-width="1"/>
<text x="1459.0" y="296.0" font-size="17.5" fill="#dedede" text-anchor="middle">O</text>
<line x1="1592.5" y1="278.0" x2="1592.5" y2="300.0" stroke="#3a3a3a" stroke-width="1"/>
<text x="1548.0" y="296.0" font-size="17.5" fill="#dedede" text-anchor="middle">P</text>
<line x1="1681.4" y1="278.0" x2="1681.4" y2="300.0" stroke="#3a3a3a" stroke-width="1"/>
<text x="1636.9" y="296.0" font-size="17.5" fill="#dedede" text-anchor="middle">Q</text>
<line x1="1770.3" y1="278.0" x2="1770.3" y2="300.0" stroke="#3a3a3a" stroke-width="1"/>
<text x="1725.9" y="296.0" font-size="17.5" fill="#dedede" text-anchor="middle">R</text>
<line x1="1859.3" y1="278.0" x2="1859.3" y2="300.0" stroke="#3a3a3a" stroke-width="1"/>
<text x="1814.8" y="296.0" font-size="17.5" fill="#dedede" text-anchor="middle">S</text>
<line x1="1948.2" y1="278.0" x2="1948.2" y2="300.0" stroke="#3a3a3a" stroke-width="1"/>
<text x="1903.8" y="296.0" font-size="17.5" fill="#dedede" text-anchor="middle">T</text>
<line x1="2037.2" y1="278.0" x2="2037.2" y2="300.0" stroke="#3a3a3a" stroke-width="1"/>
<text x="1992.7" y="296.0" font-size="17.5" fill="#dedede" text-anchor="middle">U</text>
<line x1="2126.2" y1="278.0" x2="2126.2" y2="300.0" stroke="#3a3a3a" stroke-width="1"/>
<text x="2081.7" y="296.0" font-size="17.5" fill="#dedede" text-anchor="middle">V</text>
<line x1="2215.1" y1="278.0" x2="2215.1" y2="300.0" stroke="#3a3a3a" stroke-width="1"/>
<text x="2170.6" y="296.0" font-size="17.5" fill="#dedede" text-anchor="middle">W</text>
<line x1="2304.1" y1="278.0" x2="2304.1" y2="300.0" stroke="#3a3a3a" stroke-width="1"/>
<text x="2259.6" y="296.0" font-size="17.5" fill="#dedede" text-anchor="middle">X</text>
<line x1="2393.0" y1="278.0" x2="2393.0" y2="300.0" stroke="#3a3a3a" stroke-width="1"/>
<text x="2348.5" y="296.0" font-size="17.5" fill="#dedede" text-anchor="middle">Y</text>
<line x1="2481.9" y1="278.0" x2="2481.9" y2="300.0" stroke="#3a3a3a" stroke-width="1"/>
<text x="2437.5" y="296.0" font-size="17.5" fill="#dedede" text-anchor="middle">Z</text>
<line x1="2570.9" y1="278.0" x2="2570.9" y2="300.0" stroke="#3a3a3a" stroke-width="1"/>
<text x="2526.4" y="296.0" font-size="17.5" fill="#dedede" text-anchor="middle">AA</text>
<line x1="2659.9" y1="278.0" x2="2659.9" y2="300.0" stroke="#3a3a3a" stroke-width="1"/>
<text x="2615.4" y="296.0" font-size="17.5" fill="#dedede" text-anchor="middle">AB</text>
<line x1="2748.8" y1="278.0" x2="2748.8" y2="300.0" stroke="#3a3a3a" stroke-width="1"/>
<text x="2704.3" y="296.0" font-size="17.5" fill="#dedede" text-anchor="middle">AC</text>
<line x1="2837.8" y1="278.0" x2="2837.8" y2="300.0" stroke="#3a3a3a" stroke-width="1"/>
<text x="2793.3" y="296.0" font-size="17.5" fill="#dedede" text-anchor="middle">AD</text>
<line x1="2860.0" y1="278.0" x2="2860.0" y2="300.0" stroke="#3a3a3a" stroke-width="1"/>
<path d="M29.5,296.8 L44,282.6 V296.8 Z" fill="#6a6a6a"/>
<text x="29.0" y="1048.8" font-size="17.5" fill="#dedede" text-anchor="middle">25</text>
<text x="29.0" y="1648.6" font-size="17.5" fill="#dedede" text-anchor="middle">45</text>
<rect x="11.0" y="1013.8" width="35.5" height="30.4" fill="#0a0a0a"/>
<rect x="11.0" y="1613.6" width="35.5" height="30.7" fill="#0a0a0a"/>
<rect x="11.0" y="300.4" width="35.0" height="35.1" fill="#6b6b6b"/>
<line x1="11.0" y1="336.5" x2="46.5" y2="336.5" stroke="#d0d0d0" stroke-width="1"/>
<text x="29.0" y="332.0" font-size="17.5" fill="#ffffff" text-anchor="middle">1</text>
<line x1="11.0" y1="367.5" x2="46.5" y2="367.5" stroke="#585858" stroke-width="1"/>
<text x="29.0" y="363.3" font-size="17.5" fill="#dedede" text-anchor="middle">2</text>
<line x1="11.0" y1="399.5" x2="46.5" y2="399.5" stroke="#585858" stroke-width="1"/>
<text x="29.0" y="395.0" font-size="17.5" fill="#dedede" text-anchor="middle">3</text>
<line x1="11.0" y1="422.5" x2="46.5" y2="422.5" stroke="#585858" stroke-width="1"/>
<text x="29.0" y="417.9" font-size="17.5" fill="#dedede" text-anchor="middle">4</text>
<line x1="11.0" y1="455.5" x2="46.5" y2="455.5" stroke="#585858" stroke-width="1"/>
<text x="29.0" y="450.6" font-size="17.5" fill="#dedede" text-anchor="middle">5</text>
<line x1="11.0" y1="486.5" x2="46.5" y2="486.5" stroke="#585858" stroke-width="1"/>
<text x="29.0" y="481.7" font-size="17.5" fill="#dedede" text-anchor="middle">6</text>
<line x1="11.0" y1="517.5" x2="46.5" y2="517.5" stroke="#585858" stroke-width="1"/>
<text x="29.0" y="512.7" font-size="17.5" fill="#dedede" text-anchor="middle">7</text>
<line x1="11.0" y1="548.5" x2="46.5" y2="548.5" stroke="#585858" stroke-width="1"/>
<text x="29.0" y="543.8" font-size="17.5" fill="#dedede" text-anchor="middle">8</text>
<line x1="11.0" y1="579.5" x2="46.5" y2="579.5" stroke="#585858" stroke-width="1"/>
<text x="29.0" y="574.8" font-size="17.5" fill="#dedede" text-anchor="middle">9</text>
<line x1="11.0" y1="610.5" x2="46.5" y2="610.5" stroke="#585858" stroke-width="1"/>
<text x="29.0" y="605.9" font-size="17.5" fill="#dedede" text-anchor="middle">10</text>
<line x1="11.0" y1="641.5" x2="46.5" y2="641.5" stroke="#585858" stroke-width="1"/>
<text x="29.0" y="636.9" font-size="17.5" fill="#dedede" text-anchor="middle">11</text>
<line x1="11.0" y1="672.5" x2="46.5" y2="672.5" stroke="#585858" stroke-width="1"/>
<text x="29.0" y="668.0" font-size="17.5" fill="#dedede" text-anchor="middle">12</text>
<line x1="11.0" y1="703.5" x2="46.5" y2="703.5" stroke="#585858" stroke-width="1"/>
<text x="29.0" y="699.0" font-size="17.5" fill="#dedede" text-anchor="middle">13</text>
<line x1="11.0" y1="734.5" x2="46.5" y2="734.5" stroke="#585858" stroke-width="1"/>
<text x="29.0" y="730.0" font-size="17.5" fill="#dedede" text-anchor="middle">14</text>
<line x1="11.0" y1="765.5" x2="46.5" y2="765.5" stroke="#585858" stroke-width="1"/>
<text x="29.0" y="761.1" font-size="17.5" fill="#dedede" text-anchor="middle">15</text>
<line x1="11.0" y1="796.5" x2="46.5" y2="796.5" stroke="#585858" stroke-width="1"/>
<text x="29.0" y="792.2" font-size="17.5" fill="#dedede" text-anchor="middle">16</text>
<line x1="11.0" y1="827.5" x2="46.5" y2="827.5" stroke="#585858" stroke-width="1"/>
<text x="29.0" y="823.2" font-size="17.5" fill="#dedede" text-anchor="middle">17</text>
<line x1="11.0" y1="858.5" x2="46.5" y2="858.5" stroke="#585858" stroke-width="1"/>
<text x="29.0" y="854.2" font-size="17.5" fill="#dedede" text-anchor="middle">18</text>
<line x1="11.0" y1="889.5" x2="46.5" y2="889.5" stroke="#585858" stroke-width="1"/>
<text x="29.0" y="885.3" font-size="17.5" fill="#dedede" text-anchor="middle">19</text>
<line x1="11.0" y1="920.5" x2="46.5" y2="920.5" stroke="#585858" stroke-width="1"/>
<text x="29.0" y="916.4" font-size="17.5" fill="#dedede" text-anchor="middle">20</text>
<line x1="11.0" y1="951.5" x2="46.5" y2="951.5" stroke="#585858" stroke-width="1"/>
<text x="29.0" y="947.4" font-size="17.5" fill="#dedede" text-anchor="middle">21</text>
<line x1="11.0" y1="982.5" x2="46.5" y2="982.5" stroke="#585858" stroke-width="1"/>
<text x="29.0" y="978.5" font-size="17.5" fill="#dedede" text-anchor="middle">22</text>
<line x1="11.0" y1="1014.5" x2="46.5" y2="1014.5" stroke="#585858" stroke-width="1"/>
<text x="29.0" y="1009.5" font-size="17.5" fill="#dedede" text-anchor="middle">23</text>
<line x1="11.0" y1="1044.5" x2="46.5" y2="1044.5" stroke="#585858" stroke-width="1"/>
<text x="29.0" y="1040.4" font-size="17.5" fill="#dedede" text-anchor="middle">24</text>
<line x1="11.0" y1="1055.5" x2="46.5" y2="1055.5" stroke="#585858" stroke-width="1"/>
<line x1="11.0" y1="1086.5" x2="46.5" y2="1086.5" stroke="#585858" stroke-width="1"/>
<text x="29.0" y="1082.3" font-size="17.5" fill="#dedede" text-anchor="middle">26</text>
<line x1="11.0" y1="1117.5" x2="46.5" y2="1117.5" stroke="#585858" stroke-width="1"/>
<text x="29.0" y="1113.3" font-size="17.5" fill="#dedede" text-anchor="middle">27</text>
<line x1="11.0" y1="1148.5" x2="46.5" y2="1148.5" stroke="#585858" stroke-width="1"/>
<text x="29.0" y="1144.3" font-size="17.5" fill="#dedede" text-anchor="middle">28</text>
<line x1="11.0" y1="1179.5" x2="46.5" y2="1179.5" stroke="#585858" stroke-width="1"/>
<text x="29.0" y="1175.3" font-size="17.5" fill="#dedede" text-anchor="middle">29</text>
<line x1="11.0" y1="1210.5" x2="46.5" y2="1210.5" stroke="#585858" stroke-width="1"/>
<text x="29.0" y="1206.3" font-size="17.5" fill="#dedede" text-anchor="middle">30</text>
<line x1="11.0" y1="1241.5" x2="46.5" y2="1241.5" stroke="#585858" stroke-width="1"/>
<text x="29.0" y="1237.3" font-size="17.5" fill="#dedede" text-anchor="middle">31</text>
<line x1="11.0" y1="1272.5" x2="46.5" y2="1272.5" stroke="#585858" stroke-width="1"/>
<text x="29.0" y="1268.3" font-size="17.5" fill="#dedede" text-anchor="middle">32</text>
<line x1="11.0" y1="1303.5" x2="46.5" y2="1303.5" stroke="#585858" stroke-width="1"/>
<text x="29.0" y="1299.3" font-size="17.5" fill="#dedede" text-anchor="middle">33</text>
<line x1="11.0" y1="1334.5" x2="46.5" y2="1334.5" stroke="#585858" stroke-width="1"/>
<text x="29.0" y="1330.3" font-size="17.5" fill="#dedede" text-anchor="middle">34</text>
<line x1="11.0" y1="1365.5" x2="46.5" y2="1365.5" stroke="#585858" stroke-width="1"/>
<text x="29.0" y="1361.3" font-size="17.5" fill="#dedede" text-anchor="middle">35</text>
<line x1="11.0" y1="1396.5" x2="46.5" y2="1396.5" stroke="#585858" stroke-width="1"/>
<text x="29.0" y="1392.3" font-size="17.5" fill="#dedede" text-anchor="middle">36</text>
<line x1="11.0" y1="1427.5" x2="46.5" y2="1427.5" stroke="#585858" stroke-width="1"/>
<text x="29.0" y="1423.3" font-size="17.5" fill="#dedede" text-anchor="middle">37</text>
<line x1="11.0" y1="1458.5" x2="46.5" y2="1458.5" stroke="#585858" stroke-width="1"/>
<text x="29.0" y="1454.3" font-size="17.5" fill="#dedede" text-anchor="middle">38</text>
<line x1="11.0" y1="1489.5" x2="46.5" y2="1489.5" stroke="#585858" stroke-width="1"/>
<text x="29.0" y="1485.3" font-size="17.5" fill="#dedede" text-anchor="middle">39</text>
<line x1="11.0" y1="1520.5" x2="46.5" y2="1520.5" stroke="#585858" stroke-width="1"/>
<text x="29.0" y="1516.3" font-size="17.5" fill="#dedede" text-anchor="middle">40</text>
<line x1="11.0" y1="1551.5" x2="46.5" y2="1551.5" stroke="#585858" stroke-width="1"/>
<text x="29.0" y="1547.3" font-size="17.5" fill="#dedede" text-anchor="middle">41</text>
<line x1="11.0" y1="1582.5" x2="46.5" y2="1582.5" stroke="#585858" stroke-width="1"/>
<text x="29.0" y="1578.3" font-size="17.5" fill="#dedede" text-anchor="middle">42</text>
<line x1="11.0" y1="1613.5" x2="46.5" y2="1613.5" stroke="#585858" stroke-width="1"/>
<text x="29.0" y="1609.3" font-size="17.5" fill="#dedede" text-anchor="middle">43</text>
<line x1="11.0" y1="1644.5" x2="46.5" y2="1644.5" stroke="#585858" stroke-width="1"/>
<text x="29.0" y="1640.5" font-size="17.5" fill="#dedede" text-anchor="middle">44</text>
<line x1="11.0" y1="1655.5" x2="46.5" y2="1655.5" stroke="#585858" stroke-width="1"/>
<line x1="11.0" y1="1670.5" x2="46.5" y2="1670.5" stroke="#585858" stroke-width="1"/>
<line x1="11.0" y1="300.5" x2="46.5" y2="300.5" stroke="#d0d0d0" stroke-width="1"/>
<rect x="46.0" y="300.0" width="2.0" height="36.5" fill="#217A45"/>
<text x="74.9" y="330.4" font-size="32" font-weight="bold" fill="#1f1f1f" textLength="250.0" lengthAdjust="spacingAndGlyphs">Financial Charts</text>
<text x="74.9" y="361.7" font-size="26.5" font-weight="bold" fill="#000" textLength="242.0" lengthAdjust="spacingAndGlyphs">ABC Company Inc.</text>
<text x="73.2" y="389.8" font-size="18.6" font-weight="bold" fill="#2F7BE6" textLength="210.0" lengthAdjust="spacingAndGlyphs">Go to Table of Contents</text>
<rect x="73.2" y="390.6" width="210.0" height="1.6" fill="#2F7BE6"/>
<line x1="47.0" y1="455.0" x2="69.0" y2="455.0" stroke="#C8C8C8" stroke-width="1"/>
<line x1="2839.0" y1="455.0" x2="2860.0" y2="455.0" stroke="#C8C8C8" stroke-width="1"/>
<rect x="69.0" y="422.0" width="1330.5" height="33.0" fill="#4C51D2"/>
<rect x="1414.6" y="422.0" width="1424.2" height="33.0" fill="#4C51D2"/>
<text x="734.5" y="450.0" font-size="28" font-weight="bold" fill="#fff" text-anchor="middle" textLength="112.0" lengthAdjust="spacingAndGlyphs">10 years</text>
<text x="2126.5" y="450.0" font-size="28" font-weight="bold" fill="#fff" text-anchor="middle" textLength="157.0" lengthAdjust="spacingAndGlyphs">120 months</text>
<rect x="1399.5" y="422.0" width="15.1" height="1248.0" fill="#C0C0C0"/>
<rect x="91.0" y="1044.0" width="1308.5" height="12.0" fill="#C0C0C0"/>
<rect x="1414.6" y="1044.0" width="1424.2" height="12.0" fill="#C0C0C0"/>
<rect x="91.0" y="1644.0" width="1308.5" height="12.0" fill="#C0C0C0"/>
<rect x="1414.6" y="1644.0" width="1424.2" height="12.0" fill="#C0C0C0"/>
<text x="598.6" y="497.0" font-size="34" font-weight="bold" fill="#000" text-anchor="middle" textLength="549.0" lengthAdjust="spacingAndGlyphs">REVENUE BREAKDOWN - $'000</text>
<rect x="128.0" y="508.0" width="10.0" height="10.0" fill="#4DB3E6"/>
<text x="141.0" y="519.5" font-size="18" fill="#000" textLength="318.6" lengthAdjust="spacingAndGlyphs">Conventional Green Kiwifruit (Wholesale)</text>
<rect x="562.0" y="508.0" width="10.0" height="10.0" fill="#4F52D2"/>
<text x="575.0" y="519.5" font-size="18" fill="#000" textLength="275.0" lengthAdjust="spacingAndGlyphs">Premium Gold Kiwifruit (Wholesale)</text>
<rect x="996.0" y="508.0" width="10.0" height="10.0" fill="#F07C6E"/>
<text x="1009.0" y="519.5" font-size="18" fill="#000" textLength="271.0" lengthAdjust="spacingAndGlyphs">Premium Red Kiwifruit (Wholesale)</text>
<rect x="128.0" y="527.5" width="10.0" height="10.0" fill="#F5B400"/>
<text x="141.0" y="539.0" font-size="18" fill="#000" textLength="277.0" lengthAdjust="spacingAndGlyphs">Organic Green Kiwifruit (Wholesale)</text>
<rect x="562.0" y="527.5" width="10.0" height="10.0" fill="#2DB5A8"/>
<text x="575.0" y="539.0" font-size="18" fill="#000" textLength="299.0" lengthAdjust="spacingAndGlyphs">Kiwifruit for Food Service (Bulk Green)</text>
<rect x="996.0" y="527.5" width="10.0" height="10.0" fill="#5E9E3C"/>
<text x="1009.0" y="539.0" font-size="18" fill="#000">-</text>
<rect x="128.0" y="547.0" width="10.0" height="10.0" fill="#8E9BD8"/>
<text x="141.0" y="558.5" font-size="18" fill="#000">-</text>
<rect x="562.0" y="547.0" width="10.0" height="10.0" fill="#F2A98E"/>
<text x="575.0" y="558.5" font-size="18" fill="#000">-</text>
<rect x="996.0" y="547.0" width="10.0" height="10.0" fill="#B4B4B4"/>
<text x="1009.0" y="558.5" font-size="18" fill="#000">-</text>
<rect x="128.0" y="566.0" width="10.0" height="10.0" fill="#F9D27E"/>
<text x="141.0" y="577.5" font-size="18" fill="#000">-</text>
<line x1="197.5" y1="956.5" x2="1317.8" y2="956.5" stroke="#5FA3CF" stroke-width="1"/>
<line x1="197.5" y1="899.5" x2="1317.8" y2="899.5" stroke="#5FA3CF" stroke-width="1"/>
<line x1="197.5" y1="842.5" x2="1317.8" y2="842.5" stroke="#5FA3CF" stroke-width="1"/>
<line x1="197.5" y1="785.5" x2="1317.8" y2="785.5" stroke="#5FA3CF" stroke-width="1"/>
<line x1="197.5" y1="728.5" x2="1317.8" y2="728.5" stroke="#5FA3CF" stroke-width="1"/>
<line x1="197.5" y1="671.5" x2="1317.8" y2="671.5" stroke="#5FA3CF" stroke-width="1"/>
<line x1="197.5" y1="614.5" x2="1317.8" y2="614.5" stroke="#5FA3CF" stroke-width="1"/>
<text x="161.8" y="961.8" font-size="22" font-weight="bold" fill="#000" text-anchor="end">-</text>
<text x="172.9" y="906.4" font-size="22" font-weight="bold" fill="#000" text-anchor="end" textLength="55.5" lengthAdjust="spacingAndGlyphs">2,000</text>
<text x="172.9" y="849.5" font-size="22" font-weight="bold" fill="#000" text-anchor="end" textLength="55.5" lengthAdjust="spacingAndGlyphs">4,000</text>
<text x="172.9" y="792.6" font-size="22" font-weight="bold" fill="#000" text-anchor="end" textLength="55.5" lengthAdjust="spacingAndGlyphs">6,000</text>
<text x="172.9" y="735.7" font-size="22" font-weight="bold" fill="#000" text-anchor="end" textLength="55.5" lengthAdjust="spacingAndGlyphs">8,000</text>
<text x="172.9" y="678.8" font-size="22" font-weight="bold" fill="#000" text-anchor="end" textLength="67.7" lengthAdjust="spacingAndGlyphs">10,000</text>
<text x="172.9" y="621.9" font-size="22" font-weight="bold" fill="#000" text-anchor="end" textLength="67.7" lengthAdjust="spacingAndGlyphs">12,000</text>
<rect x="219.2" y="952.5" width="69.6" height="3.1" fill="#4DB3E6"/>
<rect x="219.2" y="951.5" width="69.6" height="1.0" fill="#4F52D2"/>
<rect x="219.2" y="951.0" width="69.6" height="0.5" fill="#F07C6E"/>
<rect x="219.2" y="950.5" width="69.6" height="0.5" fill="#F5B400"/>
<rect x="219.2" y="950.0" width="69.6" height="0.5" fill="#2DB5A8"/>
<text x="254.0" y="1009.4" font-size="22" font-weight="bold" fill="#000" text-anchor="middle" textLength="49.4" lengthAdjust="spacingAndGlyphs">2026</text>
<rect x="331.0" y="944.8" width="69.6" height="10.8" fill="#4DB3E6"/>
<rect x="331.0" y="937.8" width="69.6" height="7.0" fill="#4F52D2"/>
<rect x="331.0" y="936.2" width="69.6" height="1.6" fill="#F07C6E"/>
<rect x="331.0" y="933.9" width="69.6" height="2.3" fill="#F5B400"/>
<rect x="331.0" y="931.8" width="69.6" height="2.1" fill="#2DB5A8"/>
<text x="365.8" y="1009.4" font-size="22" font-weight="bold" fill="#000" text-anchor="middle" textLength="49.4" lengthAdjust="spacingAndGlyphs">2027</text>
<rect x="442.9" y="930.7" width="69.6" height="24.9" fill="#4DB3E6"/>
<rect x="442.9" y="915.9" width="69.6" height="14.8" fill="#4F52D2"/>
<rect x="442.9" y="911.7" width="69.6" height="4.2" fill="#F07C6E"/>
<rect x="442.9" y="905.9" width="69.6" height="5.8" fill="#F5B400"/>
<rect x="442.9" y="901.8" width="69.6" height="4.1" fill="#2DB5A8"/>
<text x="477.7" y="1009.4" font-size="22" font-weight="bold" fill="#000" text-anchor="middle" textLength="49.4" lengthAdjust="spacingAndGlyphs">2028</text>
<rect x="555.0" y="910.9" width="69.6" height="44.7" fill="#4DB3E6"/>
<rect x="555.0" y="883.8" width="69.6" height="27.1" fill="#4F52D2"/>
<rect x="555.0" y="877.0" width="69.6" height="6.8" fill="#F07C6E"/>
<rect x="555.0" y="865.8" width="69.6" height="11.2" fill="#F5B400"/>
<rect x="555.0" y="858.8" width="69.6" height="7.0" fill="#2DB5A8"/>
<text x="589.8" y="1009.4" font-size="22" font-weight="bold" fill="#000" text-anchor="middle" textLength="49.4" lengthAdjust="spacingAndGlyphs">2029</text>
<rect x="667.0" y="892.9" width="69.6" height="62.7" fill="#4DB3E6"/>
<rect x="667.0" y="854.1" width="69.6" height="38.8" fill="#4F52D2"/>
<rect x="667.0" y="845.2" width="69.6" height="8.9" fill="#F07C6E"/>
<rect x="667.0" y="829.8" width="69.6" height="15.4" fill="#F5B400"/>
<rect x="667.0" y="818.9" width="69.6" height="10.9" fill="#2DB5A8"/>
<text x="701.8" y="1009.4" font-size="22" font-weight="bold" fill="#000" text-anchor="middle" textLength="49.4" lengthAdjust="spacingAndGlyphs">2030</text>
<rect x="779.2" y="877.0" width="69.6" height="78.6" fill="#4DB3E6"/>
<rect x="779.2" y="828.0" width="69.6" height="49.0" fill="#4F52D2"/>
<rect x="779.2" y="816.3" width="69.6" height="11.7" fill="#F07C6E"/>
<rect x="779.2" y="797.2" width="69.6" height="19.1" fill="#F5B400"/>
<rect x="779.2" y="784.2" width="69.6" height="13.0" fill="#2DB5A8"/>
<text x="814.0" y="1009.4" font-size="22" font-weight="bold" fill="#000" text-anchor="middle" textLength="49.4" lengthAdjust="spacingAndGlyphs">2031</text>
<rect x="891.0" y="857.0" width="69.6" height="98.6" fill="#4DB3E6"/>
<rect x="891.0" y="796.0" width="69.6" height="61.0" fill="#4F52D2"/>
<rect x="891.0" y="782.4" width="69.6" height="13.6" fill="#F07C6E"/>
<rect x="891.0" y="757.1" width="69.6" height="25.3" fill="#F5B400"/>
<rect x="891.0" y="741.0" width="69.6" height="16.1" fill="#2DB5A8"/>
<text x="925.8" y="1009.4" font-size="22" font-weight="bold" fill="#000" text-anchor="middle" textLength="49.4" lengthAdjust="spacingAndGlyphs">2032</text>
<rect x="1002.9" y="842.9" width="69.6" height="112.7" fill="#4DB3E6"/>
<rect x="1002.9" y="772.0" width="69.6" height="70.9" fill="#4F52D2"/>
<rect x="1002.9" y="755.8" width="69.6" height="16.2" fill="#F07C6E"/>
<rect x="1002.9" y="728.2" width="69.6" height="27.6" fill="#F5B400"/>
<rect x="1002.9" y="709.1" width="69.6" height="19.1" fill="#2DB5A8"/>
<text x="1037.7" y="1009.4" font-size="22" font-weight="bold" fill="#000" text-anchor="middle" textLength="49.4" lengthAdjust="spacingAndGlyphs">2033</text>
<rect x="1115.0" y="827.7" width="69.6" height="127.9" fill="#4DB3E6"/>
<rect x="1115.0" y="748.0" width="69.6" height="79.7" fill="#4F52D2"/>
<rect x="1115.0" y="730.3" width="69.6" height="17.7" fill="#F07C6E"/>
<rect x="1115.0" y="697.9" width="69.6" height="32.4" fill="#F5B400"/>
<rect x="1115.0" y="677.0" width="69.6" height="20.9" fill="#2DB5A8"/>
<text x="1149.8" y="1009.4" font-size="22" font-weight="bold" fill="#000" text-anchor="middle" textLength="49.4" lengthAdjust="spacingAndGlyphs">2034</text>
<rect x="1227.0" y="824.9" width="69.6" height="130.7" fill="#4DB3E6"/>
<rect x="1227.0" y="744.0" width="69.6" height="80.9" fill="#4F52D2"/>
<rect x="1227.0" y="725.3" width="69.6" height="18.7" fill="#F07C6E"/>
<rect x="1227.0" y="693.0" width="69.6" height="32.3" fill="#F5B400"/>
<rect x="1227.0" y="671.3" width="69.6" height="21.7" fill="#2DB5A8"/>
<text x="1261.8" y="1009.4" font-size="22" font-weight="bold" fill="#000" text-anchor="middle" textLength="49.4" lengthAdjust="spacingAndGlyphs">2035</text>
<rect x="219.2" y="949.2" width="69.6" height="1.3" fill="#7A8A8A"/>
<line x1="197.5" y1="955.6" x2="1317.8" y2="955.6" stroke="#5AA3D3" stroke-width="2"/>
<text x="2097.3" y="497.5" font-size="34" font-weight="bold" fill="#000" text-anchor="middle" textLength="547.0" lengthAdjust="spacingAndGlyphs">REVENUE BREAKDOWN - $'000</text>
<rect x="1512.0" y="527.3" width="10.0" height="10.0" fill="#4DB3E6"/>
<text x="1522.0" y="538.8" font-size="18" fill="#000" textLength="318.0" lengthAdjust="spacingAndGlyphs">Conventional Green Kiwifruit (Wholesale)</text>
<rect x="1927.0" y="527.3" width="10.0" height="10.0" fill="#4F52D2"/>
<text x="1937.0" y="538.8" font-size="18" fill="#000" textLength="275.0" lengthAdjust="spacingAndGlyphs">Premium Gold Kiwifruit (Wholesale)</text>
<rect x="2300.0" y="527.3" width="10.0" height="10.0" fill="#F07C6E"/>
<text x="2310.0" y="538.8" font-size="18" fill="#000" textLength="270.5" lengthAdjust="spacingAndGlyphs">Premium Red Kiwifruit (Wholesale)</text>
<line x1="1515.8" y1="954.5" x2="2789.2" y2="954.5" stroke="#5FA3CF" stroke-width="1"/>
<line x1="1515.8" y1="916.5" x2="2789.2" y2="916.5" stroke="#5FA3CF" stroke-width="1"/>
<line x1="1515.8" y1="878.5" x2="2789.2" y2="878.5" stroke="#5FA3CF" stroke-width="1"/>
<line x1="1515.8" y1="840.5" x2="2789.2" y2="840.5" stroke="#5FA3CF" stroke-width="1"/>
<line x1="1515.8" y1="802.5" x2="2789.2" y2="802.5" stroke="#5FA3CF" stroke-width="1"/>
<line x1="1515.8" y1="764.5" x2="2789.2" y2="764.5" stroke="#5FA3CF" stroke-width="1"/>
<line x1="1515.8" y1="726.5" x2="2789.2" y2="726.5" stroke="#5FA3CF" stroke-width="1"/>
<line x1="1515.8" y1="689.5" x2="2789.2" y2="689.5" stroke="#5FA3CF" stroke-width="1"/>
<line x1="1515.8" y1="651.5" x2="2789.2" y2="651.5" stroke="#5FA3CF" stroke-width="1"/>
<line x1="1515.8" y1="613.5" x2="2789.2" y2="613.5" stroke="#5FA3CF" stroke-width="1"/>
<text x="1480.5" y="959.8" font-size="22" font-weight="bold" fill="#000" text-anchor="end">-</text>
<text x="1492.9" y="923.2" font-size="22" font-weight="bold" fill="#000" text-anchor="end" textLength="36.5" lengthAdjust="spacingAndGlyphs">200</text>
<text x="1492.9" y="885.4" font-size="22" font-weight="bold" fill="#000" text-anchor="end" textLength="36.5" lengthAdjust="spacingAndGlyphs">400</text>
<text x="1492.9" y="847.5" font-size="22" font-weight="bold" fill="#000" text-anchor="end" textLength="36.5" lengthAdjust="spacingAndGlyphs">600</text>
<text x="1492.9" y="809.7" font-size="22" font-weight="bold" fill="#000" text-anchor="end" textLength="36.5" lengthAdjust="spacingAndGlyphs">800</text>
<text x="1492.9" y="771.8" font-size="22" font-weight="bold" fill="#000" text-anchor="end" textLength="56.0" lengthAdjust="spacingAndGlyphs">1,000</text>
<text x="1492.9" y="733.9" font-size="22" font-weight="bold" fill="#000" text-anchor="end" textLength="56.0" lengthAdjust="spacingAndGlyphs">1,200</text>
<text x="1492.9" y="696.1" font-size="22" font-weight="bold" fill="#000" text-anchor="end" textLength="56.0" lengthAdjust="spacingAndGlyphs">1,400</text>
<text x="1492.9" y="658.2" font-size="22" font-weight="bold" fill="#000" text-anchor="end" textLength="56.0" lengthAdjust="spacingAndGlyphs">1,600</text>
<text x="1492.9" y="620.4" font-size="22" font-weight="bold" fill="#000" text-anchor="end" textLength="56.0" lengthAdjust="spacingAndGlyphs">1,800</text>
<polygon points="1516.3,953.6 1516.30,953.60 1526.99,953.60 1537.69,950.86 1548.38,948.11 1559.08,948.11 1569.77,948.11 1580.47,948.11 1591.16,948.30 1601.86,950.93 1612.55,952.95 1623.25,953.60 1633.94,953.60 1644.64,953.60 1655.33,953.60 1666.03,940.82 1676.72,928.05 1687.42,928.05 1698.11,928.05 1708.81,928.05 1719.50,929.47 1730.20,941.08 1740.89,949.84 1751.59,953.60 1762.28,953.60 1772.98,953.60 1783.67,953.60 1794.37,924.73 1805.06,895.87 1815.76,895.87 1826.45,895.87 1837.15,895.87 1847.84,898.90 1858.54,925.72 1869.23,945.64 1879.93,953.60 1890.62,953.60 1901.32,953.60 1912.01,953.60 1922.71,901.83 1933.40,850.06 1944.10,850.06 1954.79,850.06 1965.49,850.06 1976.18,854.99 1986.88,902.45 1997.57,938.77 2008.27,953.60 2018.96,953.60 2029.66,953.60 2040.35,953.60 2051.05,880.73 2061.74,807.85 2072.44,807.85 2083.13,807.85 2093.83,807.85 2104.52,814.86 2115.22,882.46 2125.91,933.15 2136.61,953.60 2147.30,953.60 2158.00,953.60 2168.69,953.60 2179.39,862.08 2190.08,770.57 2200.78,770.57 2211.47,770.57 2222.17,770.57 2232.86,779.18 2243.56,862.84 2254.25,926.62 2264.95,953.60 2275.64,953.60 2286.34,953.60 2297.03,953.60 2307.73,839.27 2318.42,724.95 2329.12,724.95 2339.81,724.95 2350.51,724.95 2361.20,735.93 2371.90,840.39 2382.59,920.51 2393.29,953.60 2403.98,953.60 2414.68,953.60 2425.37,953.60 2436.07,822.81 2446.76,692.02 2457.46,692.02 2468.15,692.02 2478.85,692.02 2489.54,704.22 2500.24,823.38 2510.93,915.33 2521.63,953.60 2532.32,953.60 2543.02,953.60 2553.71,953.60 2564.41,805.30 2575.10,657.00 2585.80,657.00 2596.49,657.00 2607.19,657.00 2617.88,671.29 2628.58,806.31 2639.27,910.18 2649.97,953.60 2660.66,953.60 2671.36,953.60 2682.05,953.60 2692.75,802.37 2703.44,651.13 2714.14,651.13 2724.83,651.13 2735.53,651.13 2746.22,665.61 2756.92,803.60 2767.61,909.42 2778.31,953.60 2789.00,953.60 2789.0,953.6" fill="#2DB5A8"/>
<polygon points="1516.3,953.6 1516.30,953.60 1526.99,953.60 1537.69,951.04 1548.38,948.49 1559.08,948.49 1569.77,948.49 1580.47,948.49 1591.16,948.49 1601.86,950.95 1612.55,952.95 1623.25,953.60 1633.94,953.60 1644.64,953.60 1655.33,953.60 1666.03,942.24 1676.72,930.89 1687.42,930.89 1698.11,930.89 1708.81,930.89 1719.50,930.89 1730.20,941.26 1740.89,949.90 1751.59,953.60 1762.28,953.60 1772.98,953.60 1783.67,953.60 1794.37,927.76 1805.06,901.93 1815.76,901.93 1826.45,901.93 1837.15,901.93 1847.84,901.93 1858.54,926.08 1869.23,945.76 1879.93,953.60 1890.62,953.60 1901.32,953.60 1912.01,953.60 1922.71,906.75 1933.40,859.91 1944.10,859.91 1954.79,859.91 1965.49,859.91 1976.18,859.91 1986.88,903.04 1997.57,938.97 2008.27,953.60 2018.96,953.60 2029.66,953.60 2040.35,953.60 2051.05,887.73 2061.74,821.86 2072.44,821.86 2083.13,821.86 2093.83,821.86 2104.52,821.86 2115.22,883.30 2125.91,933.43 2136.61,953.60 2147.30,953.60 2158.00,953.60 2168.69,953.60 2179.39,870.70 2190.08,787.79 2200.78,787.79 2211.47,787.79 2222.17,787.79 2232.86,787.79 2243.56,863.88 2254.25,926.97 2264.95,953.60 2275.64,953.60 2286.34,953.60 2297.03,953.60 2307.73,850.25 2318.42,746.91 2329.12,746.91 2339.81,746.91 2350.51,746.91 2361.20,746.91 2371.90,841.71 2382.59,920.95 2393.29,953.60 2403.98,953.60 2414.68,953.60 2425.37,953.60 2436.07,835.02 2446.76,716.43 2457.46,716.43 2468.15,716.43 2478.85,716.43 2489.54,716.43 2500.24,824.84 2510.93,915.82 2521.63,953.60 2532.32,953.60 2543.02,953.60 2553.71,953.60 2564.41,819.59 2575.10,685.58 2585.80,685.58 2596.49,685.58 2607.19,685.58 2617.88,685.58 2628.58,808.02 2639.27,910.75 2649.97,953.60 2660.66,953.60 2671.36,953.60 2682.05,953.60 2692.75,816.85 2703.44,680.09 2714.14,680.09 2724.83,680.09 2735.53,680.09 2746.22,680.09 2756.92,805.33 2767.61,910.00 2778.31,953.60 2789.00,953.60 2789.0,953.6" fill="#F5B400"/>
<polygon points="1516.3,953.6 1516.30,953.60 1526.99,953.60 1537.69,951.23 1548.38,948.87 1559.08,948.87 1569.77,948.87 1580.47,948.87 1591.16,948.87 1601.86,951.02 1612.55,953.00 1623.25,953.60 1633.94,953.60 1644.64,953.60 1655.33,953.60 1666.03,943.28 1676.72,932.97 1687.42,932.97 1698.11,932.97 1708.81,932.97 1719.50,932.97 1730.20,941.63 1740.89,950.15 1751.59,953.60 1762.28,953.60 1772.98,953.60 1783.67,953.60 1794.37,930.41 1805.06,907.23 1815.76,907.23 1826.45,907.23 1837.15,907.23 1847.84,907.23 1858.54,927.03 1869.23,946.40 1879.93,953.60 1890.62,953.60 1901.32,953.60 1912.01,953.60 1922.71,912.53 1933.40,871.45 1944.10,871.45 1954.79,871.45 1965.49,871.45 1976.18,871.45 1986.88,905.12 1997.57,940.35 2008.27,953.60 2018.96,953.60 2029.66,953.60 2040.35,953.60 2051.05,895.30 2061.74,837.00 2072.44,837.00 2083.13,837.00 2093.83,837.00 2104.52,837.00 2115.22,886.02 2125.91,935.24 2136.61,953.60 2147.30,953.60 2158.00,953.60 2168.69,953.60 2179.39,880.16 2190.08,806.72 2200.78,806.72 2211.47,806.72 2222.17,806.72 2232.86,806.72 2243.56,867.28 2254.25,929.24 2264.95,953.60 2275.64,953.60 2286.34,953.60 2297.03,953.60 2307.73,861.52 2318.42,769.43 2329.12,769.43 2339.81,769.43 2350.51,769.43 2361.20,769.43 2371.90,845.76 2382.59,923.65 2393.29,953.60 2403.98,953.60 2414.68,953.60 2425.37,953.60 2436.07,848.45 2446.76,743.31 2457.46,743.31 2468.15,743.31 2478.85,743.31 2489.54,743.31 2500.24,829.68 2510.93,919.04 2521.63,953.60 2532.32,953.60 2543.02,953.60 2553.71,953.60 2564.41,834.45 2575.10,715.30 2585.80,715.30 2596.49,715.30 2607.19,715.30 2617.88,715.30 2628.58,813.37 2639.27,914.32 2649.97,953.60 2660.66,953.60 2671.36,953.60 2682.05,953.60 2692.75,832.46 2703.44,711.32 2714.14,711.32 2724.83,711.32 2735.53,711.32 2746.22,711.32 2756.92,810.95 2767.61,913.75 2778.31,953.60 2789.00,953.60 2789.0,953.6" fill="#F07C6E"/>
<polygon points="1516.3,953.6 1516.30,953.60 1526.99,953.60 1537.69,951.52 1548.38,949.44 1559.08,949.44 1569.77,949.44 1580.47,949.44 1591.16,949.44 1601.86,951.09 1612.55,953.03 1623.25,953.60 1633.94,953.60 1644.64,953.60 1655.33,953.60 1666.03,944.42 1676.72,935.24 1687.42,935.24 1698.11,935.24 1708.81,935.24 1719.50,935.24 1730.20,941.90 1740.89,950.29 1751.59,953.60 1762.28,953.60 1772.98,953.60 1783.67,953.60 1794.37,932.87 1805.06,912.15 1815.76,912.15 1826.45,912.15 1837.15,912.15 1847.84,912.15 1858.54,927.62 1869.23,946.69 1879.93,953.60 1890.62,953.60 1901.32,953.60 1912.01,953.60 1922.71,915.65 1933.40,877.70 1944.10,877.70 1954.79,877.70 1965.49,877.70 1976.18,877.70 1986.88,905.87 1997.57,940.73 2008.27,953.60 2018.96,953.60 2029.66,953.60 2040.35,953.60 2051.05,900.79 2061.74,847.98 2072.44,847.98 2083.13,847.98 2093.83,847.98 2104.52,847.98 2115.22,887.34 2125.91,935.90 2136.61,953.60 2147.30,953.60 2158.00,953.60 2168.69,953.60 2179.39,886.78 2190.08,819.97 2200.78,819.97 2211.47,819.97 2222.17,819.97 2232.86,819.97 2243.56,868.87 2254.25,930.03 2264.95,953.60 2275.64,953.60 2286.34,953.60 2297.03,953.60 2307.73,869.75 2318.42,785.90 2329.12,785.90 2339.81,785.90 2350.51,785.90 2361.20,785.90 2371.90,847.74 2382.59,924.64 2393.29,953.60 2403.98,953.60 2414.68,953.60 2425.37,953.60 2436.07,857.26 2446.76,760.91 2457.46,760.91 2468.15,760.91 2478.85,760.91 2489.54,760.91 2500.24,831.79 2510.93,920.10 2521.63,953.60 2532.32,953.60 2543.02,953.60 2553.71,953.60 2564.41,844.76 2575.10,735.93 2585.80,735.93 2596.49,735.93 2607.19,735.93 2617.88,735.93 2628.58,815.85 2639.27,915.55 2649.97,953.60 2660.66,953.60 2671.36,953.60 2682.05,953.60 2692.75,842.78 2703.44,731.95 2714.14,731.95 2724.83,731.95 2735.53,731.95 2746.22,731.95 2756.92,813.43 2767.61,914.99 2778.31,953.60 2789.00,953.60 2789.0,953.6" fill="#4F52D2"/>
<polygon points="1516.3,953.6 1516.30,953.60 1526.99,953.60 1537.69,952.09 1548.38,950.57 1559.08,950.57 1569.77,950.57 1580.47,950.57 1591.16,950.57 1601.86,952.09 1612.55,953.60 1623.25,953.60 1633.94,953.60 1644.64,953.60 1655.33,953.60 1666.03,947.73 1676.72,941.86 1687.42,941.86 1698.11,941.86 1708.81,941.86 1719.50,941.86 1730.20,947.73 1740.89,953.60 1751.59,953.60 1762.28,953.60 1772.98,953.60 1783.67,953.60 1794.37,939.78 1805.06,925.97 1815.76,925.97 1826.45,925.97 1837.15,925.97 1847.84,925.97 1858.54,939.78 1869.23,953.60 1879.93,953.60 1890.62,953.60 1901.32,953.60 1912.01,953.60 1922.71,928.52 1933.40,903.44 1944.10,903.44 1954.79,903.44 1965.49,903.44 1976.18,903.44 1986.88,928.52 1997.57,953.60 2008.27,953.60 2018.96,953.60 2029.66,953.60 2040.35,953.60 2051.05,918.49 2061.74,883.38 2072.44,883.38 2083.13,883.38 2093.83,883.38 2104.52,883.38 2115.22,918.49 2125.91,953.60 2136.61,953.60 2147.30,953.60 2158.00,953.60 2168.69,953.60 2179.39,910.35 2190.08,867.10 2200.78,867.10 2211.47,867.10 2222.17,867.10 2232.86,867.10 2243.56,910.35 2254.25,953.60 2264.95,953.60 2275.64,953.60 2286.34,953.60 2297.03,953.60 2307.73,898.71 2318.42,843.82 2329.12,843.82 2339.81,843.82 2350.51,843.82 2361.20,843.82 2371.90,898.71 2382.59,953.60 2393.29,953.60 2403.98,953.60 2414.68,953.60 2425.37,953.60 2436.07,890.76 2446.76,827.92 2457.46,827.92 2468.15,827.92 2478.85,827.92 2489.54,827.92 2500.24,890.76 2510.93,953.60 2521.63,953.60 2532.32,953.60 2543.02,953.60 2553.71,953.60 2564.41,882.81 2575.10,812.02 2585.80,812.02 2596.49,812.02 2607.19,812.02 2617.88,812.02 2628.58,882.81 2639.27,953.60 2649.97,953.60 2660.66,953.60 2671.36,953.60 2682.05,953.60 2692.75,881.39 2703.44,809.18 2714.14,809.18 2724.83,809.18 2735.53,809.18 2746.22,809.18 2756.92,881.39 2767.61,953.60 2778.31,953.60 2789.00,953.60 2789.0,953.6" fill="#4DB3E6"/>
<line x1="1515.8" y1="953.6" x2="2789.2" y2="953.6" stroke="#5AA3D3" stroke-width="2"/>
<text x="1522.8" y="985.0" font-size="19" fill="#000" text-anchor="end" transform="rotate(-45 1522.8 985.0)">Jan-26</text>
<text x="1565.6" y="985.0" font-size="19" fill="#000" text-anchor="end" transform="rotate(-45 1565.6 985.0)">May-26</text>
<text x="1608.4" y="985.0" font-size="19" fill="#000" text-anchor="end" transform="rotate(-45 1608.4 985.0)">Sep-26</text>
<text x="1651.1" y="985.0" font-size="19" fill="#000" text-anchor="end" transform="rotate(-45 1651.1 985.0)">Jan-27</text>
<text x="1693.9" y="985.0" font-size="19" fill="#000" text-anchor="end" transform="rotate(-45 1693.9 985.0)">May-27</text>
<text x="1736.7" y="985.0" font-size="19" fill="#000" text-anchor="end" transform="rotate(-45 1736.7 985.0)">Sep-27</text>
<text x="1779.5" y="985.0" font-size="19" fill="#000" text-anchor="end" transform="rotate(-45 1779.5 985.0)">Jan-28</text>
<text x="1822.3" y="985.0" font-size="19" fill="#000" text-anchor="end" transform="rotate(-45 1822.3 985.0)">May-28</text>
<text x="1865.0" y="985.0" font-size="19" fill="#000" text-anchor="end" transform="rotate(-45 1865.0 985.0)">Sep-28</text>
<text x="1907.8" y="985.0" font-size="19" fill="#000" text-anchor="end" transform="rotate(-45 1907.8 985.0)">Jan-29</text>
<text x="1950.6" y="985.0" font-size="19" fill="#000" text-anchor="end" transform="rotate(-45 1950.6 985.0)">May-29</text>
<text x="1993.4" y="985.0" font-size="19" fill="#000" text-anchor="end" transform="rotate(-45 1993.4 985.0)">Sep-29</text>
<text x="2036.2" y="985.0" font-size="19" fill="#000" text-anchor="end" transform="rotate(-45 2036.2 985.0)">Jan-30</text>
<text x="2078.9" y="985.0" font-size="19" fill="#000" text-anchor="end" transform="rotate(-45 2078.9 985.0)">May-30</text>
<text x="2121.7" y="985.0" font-size="19" fill="#000" text-anchor="end" transform="rotate(-45 2121.7 985.0)">Sep-30</text>
<text x="2164.5" y="985.0" font-size="19" fill="#000" text-anchor="end" transform="rotate(-45 2164.5 985.0)">Jan-31</text>
<text x="2207.3" y="985.0" font-size="19" fill="#000" text-anchor="end" transform="rotate(-45 2207.3 985.0)">May-31</text>
<text x="2250.1" y="985.0" font-size="19" fill="#000" text-anchor="end" transform="rotate(-45 2250.1 985.0)">Sep-31</text>
<text x="2292.8" y="985.0" font-size="19" fill="#000" text-anchor="end" transform="rotate(-45 2292.8 985.0)">Jan-32</text>
<text x="2335.6" y="985.0" font-size="19" fill="#000" text-anchor="end" transform="rotate(-45 2335.6 985.0)">May-32</text>
<text x="2378.4" y="985.0" font-size="19" fill="#000" text-anchor="end" transform="rotate(-45 2378.4 985.0)">Sep-32</text>
<text x="2421.2" y="985.0" font-size="19" fill="#000" text-anchor="end" transform="rotate(-45 2421.2 985.0)">Jan-33</text>
<text x="2464.0" y="985.0" font-size="19" fill="#000" text-anchor="end" transform="rotate(-45 2464.0 985.0)">May-33</text>
<text x="2506.7" y="985.0" font-size="19" fill="#000" text-anchor="end" transform="rotate(-45 2506.7 985.0)">Sep-33</text>
<text x="2549.5" y="985.0" font-size="19" fill="#000" text-anchor="end" transform="rotate(-45 2549.5 985.0)">Jan-34</text>
<text x="2592.3" y="985.0" font-size="19" fill="#000" text-anchor="end" transform="rotate(-45 2592.3 985.0)">May-34</text>
<text x="2635.1" y="985.0" font-size="19" fill="#000" text-anchor="end" transform="rotate(-45 2635.1 985.0)">Sep-34</text>
<text x="2677.9" y="985.0" font-size="19" fill="#000" text-anchor="end" transform="rotate(-45 2677.9 985.0)">Jan-35</text>
<text x="2720.6" y="985.0" font-size="19" fill="#000" text-anchor="end" transform="rotate(-45 2720.6 985.0)">May-35</text>
<text x="2763.4" y="985.0" font-size="19" fill="#000" text-anchor="end" transform="rotate(-45 2763.4 985.0)">Sep-35</text>
<text x="649.6" y="1098.8" font-size="34" font-weight="bold" fill="#000" text-anchor="middle" textLength="414.0" lengthAdjust="spacingAndGlyphs">CASH BALANCE - $'000</text>
<line x1="185.4" y1="1557.5" x2="1314.0" y2="1557.5" stroke="#5FA3CF" stroke-width="1"/>
<line x1="185.4" y1="1489.5" x2="1314.0" y2="1489.5" stroke="#5FA3CF" stroke-width="1"/>
<line x1="185.4" y1="1420.5" x2="1314.0" y2="1420.5" stroke="#5FA3CF" stroke-width="1"/>
<line x1="185.4" y1="1351.5" x2="1314.0" y2="1351.5" stroke="#5FA3CF" stroke-width="1"/>
<line x1="185.4" y1="1282.5" x2="1314.0" y2="1282.5" stroke="#5FA3CF" stroke-width="1"/>
<line x1="185.4" y1="1213.5" x2="1314.0" y2="1213.5" stroke="#5FA3CF" stroke-width="1"/>
<line x1="185.4" y1="1145.5" x2="1314.0" y2="1145.5" stroke="#5FA3CF" stroke-width="1"/>
<text x="166.0" y="1564.4" font-size="22" font-weight="bold" fill="#000" text-anchor="end" textLength="73.6" lengthAdjust="spacingAndGlyphs">(5,000)</text>
<text x="148.0" y="1494.8" font-size="22" font-weight="bold" fill="#000" text-anchor="end">-</text>
<text x="160.0" y="1427.5" font-size="22" font-weight="bold" fill="#000" text-anchor="end" textLength="55.5" lengthAdjust="spacingAndGlyphs">5,000</text>
<text x="160.0" y="1358.7" font-size="22" font-weight="bold" fill="#000" text-anchor="end" textLength="67.7" lengthAdjust="spacingAndGlyphs">10,000</text>
<text x="160.0" y="1289.9" font-size="22" font-weight="bold" fill="#000" text-anchor="end" textLength="67.7" lengthAdjust="spacingAndGlyphs">15,000</text>
<text x="160.0" y="1221.1" font-size="22" font-weight="bold" fill="#000" text-anchor="end" textLength="67.7" lengthAdjust="spacingAndGlyphs">20,000</text>
<text x="160.0" y="1152.3" font-size="22" font-weight="bold" fill="#000" text-anchor="end" textLength="67.7" lengthAdjust="spacingAndGlyphs">25,000</text>
<rect x="206.0" y="1488.6" width="71.0" height="8.3" fill="#4DB3E6"/>
<text x="241.5" y="1610.4" font-size="22" font-weight="bold" fill="#000" text-anchor="middle" textLength="49.4" lengthAdjust="spacingAndGlyphs">2026</text>
<rect x="319.0" y="1488.6" width="71.0" height="10.4" fill="#4DB3E6"/>
<text x="354.5" y="1610.4" font-size="22" font-weight="bold" fill="#000" text-anchor="middle" textLength="49.4" lengthAdjust="spacingAndGlyphs">2027</text>
<rect x="432.0" y="1488.6" width="71.0" height="6.1" fill="#4DB3E6"/>
<text x="467.5" y="1610.4" font-size="22" font-weight="bold" fill="#000" text-anchor="middle" textLength="49.4" lengthAdjust="spacingAndGlyphs">2028</text>
<rect x="545.0" y="1479.2" width="71.0" height="9.4" fill="#4DB3E6"/>
<text x="580.5" y="1610.4" font-size="22" font-weight="bold" fill="#000" text-anchor="middle" textLength="49.4" lengthAdjust="spacingAndGlyphs">2029</text>
<rect x="658.0" y="1451.8" width="71.0" height="36.8" fill="#4DB3E6"/>
<text x="693.5" y="1610.4" font-size="22" font-weight="bold" fill="#000" text-anchor="middle" textLength="49.4" lengthAdjust="spacingAndGlyphs">2030</text>
<rect x="771.0" y="1416.0" width="71.0" height="72.6" fill="#4DB3E6"/>
<text x="806.5" y="1610.4" font-size="22" font-weight="bold" fill="#000" text-anchor="middle" textLength="49.4" lengthAdjust="spacingAndGlyphs">2031</text>
<rect x="884.0" y="1367.0" width="71.0" height="121.6" fill="#4DB3E6"/>
<text x="919.5" y="1610.4" font-size="22" font-weight="bold" fill="#000" text-anchor="middle" textLength="49.4" lengthAdjust="spacingAndGlyphs">2032</text>
<rect x="997.0" y="1310.0" width="71.0" height="178.6" fill="#4DB3E6"/>
<text x="1032.5" y="1610.4" font-size="22" font-weight="bold" fill="#000" text-anchor="middle" textLength="49.4" lengthAdjust="spacingAndGlyphs">2033</text>
<rect x="1110.0" y="1240.2" width="71.0" height="248.4" fill="#4DB3E6"/>
<text x="1145.5" y="1610.4" font-size="22" font-weight="bold" fill="#000" text-anchor="middle" textLength="49.4" lengthAdjust="spacingAndGlyphs">2034</text>
<rect x="1223.0" y="1163.0" width="71.0" height="325.6" fill="#4DB3E6"/>
<text x="1258.5" y="1610.4" font-size="22" font-weight="bold" fill="#000" text-anchor="middle" textLength="49.4" lengthAdjust="spacingAndGlyphs">2035</text>
<line x1="185.0" y1="1488.6" x2="1315.0" y2="1488.6" stroke="#4A6DB8" stroke-width="2"/>
<line x1="185.2" y1="1488.6" x2="185.2" y2="1494.6" stroke="#4A6DB8" stroke-width="2"/>
<line x1="298.1" y1="1488.6" x2="298.1" y2="1494.6" stroke="#4A6DB8" stroke-width="2"/>
<line x1="411.0" y1="1488.6" x2="411.0" y2="1494.6" stroke="#4A6DB8" stroke-width="2"/>
<line x1="523.9" y1="1488.6" x2="523.9" y2="1494.6" stroke="#4A6DB8" stroke-width="2"/>
<line x1="636.8" y1="1488.6" x2="636.8" y2="1494.6" stroke="#4A6DB8" stroke-width="2"/>
<line x1="749.7" y1="1488.6" x2="749.7" y2="1494.6" stroke="#4A6DB8" stroke-width="2"/>
<line x1="862.6" y1="1488.6" x2="862.6" y2="1494.6" stroke="#4A6DB8" stroke-width="2"/>
<line x1="975.5" y1="1488.6" x2="975.5" y2="1494.6" stroke="#4A6DB8" stroke-width="2"/>
<line x1="1088.4" y1="1488.6" x2="1088.4" y2="1494.6" stroke="#4A6DB8" stroke-width="2"/>
<line x1="1201.3" y1="1488.6" x2="1201.3" y2="1494.6" stroke="#4A6DB8" stroke-width="2"/>
<line x1="1314.2" y1="1488.6" x2="1314.2" y2="1494.6" stroke="#4A6DB8" stroke-width="2"/>
<line x1="241.6" y1="1488.6" x2="241.6" y2="1493.6" stroke="#4A6DB8" stroke-width="2"/>
<line x1="354.6" y1="1488.6" x2="354.6" y2="1493.6" stroke="#4A6DB8" stroke-width="2"/>
<line x1="467.4" y1="1488.6" x2="467.4" y2="1493.6" stroke="#4A6DB8" stroke-width="2"/>
<line x1="580.4" y1="1488.6" x2="580.4" y2="1493.6" stroke="#4A6DB8" stroke-width="2"/>
<line x1="693.2" y1="1488.6" x2="693.2" y2="1493.6" stroke="#4A6DB8" stroke-width="2"/>
<line x1="806.2" y1="1488.6" x2="806.2" y2="1493.6" stroke="#4A6DB8" stroke-width="2"/>
<line x1="919.0" y1="1488.6" x2="919.0" y2="1493.6" stroke="#4A6DB8" stroke-width="2"/>
<line x1="1032.0" y1="1488.6" x2="1032.0" y2="1493.6" stroke="#4A6DB8" stroke-width="2"/>
<line x1="1144.9" y1="1488.6" x2="1144.9" y2="1493.6" stroke="#4A6DB8" stroke-width="2"/>
<line x1="1257.8" y1="1488.6" x2="1257.8" y2="1493.6" stroke="#4A6DB8" stroke-width="2"/>
<text x="2112.5" y="1096.0" font-size="34" font-weight="bold" fill="#000" text-anchor="middle" textLength="413.0" lengthAdjust="spacingAndGlyphs">CASH BALANCE - $'000</text>
<line x1="1528.0" y1="1556.5" x2="2789.2" y2="1556.5" stroke="#5FA3CF" stroke-width="1"/>
<line x1="1528.0" y1="1498.5" x2="2789.2" y2="1498.5" stroke="#5FA3CF" stroke-width="1"/>
<line x1="1528.0" y1="1439.5" x2="2789.2" y2="1439.5" stroke="#5FA3CF" stroke-width="1"/>
<line x1="1528.0" y1="1381.5" x2="2789.2" y2="1381.5" stroke="#5FA3CF" stroke-width="1"/>
<line x1="1528.0" y1="1323.5" x2="2789.2" y2="1323.5" stroke="#5FA3CF" stroke-width="1"/>
<line x1="1528.0" y1="1265.5" x2="2789.2" y2="1265.5" stroke="#5FA3CF" stroke-width="1"/>
<line x1="1528.0" y1="1206.5" x2="2789.2" y2="1206.5" stroke="#5FA3CF" stroke-width="1"/>
<line x1="1528.0" y1="1148.5" x2="2789.2" y2="1148.5" stroke="#5FA3CF" stroke-width="1"/>
<text x="1508.5" y="1562.8" font-size="22" font-weight="bold" fill="#000" text-anchor="end" textLength="73.6" lengthAdjust="spacingAndGlyphs">(5,000)</text>
<text x="1491.5" y="1503.8" font-size="22" font-weight="bold" fill="#000" text-anchor="end">-</text>
<text x="1503.6" y="1447.1" font-size="22" font-weight="bold" fill="#000" text-anchor="end" textLength="55.5" lengthAdjust="spacingAndGlyphs">5,000</text>
<text x="1503.6" y="1388.9" font-size="22" font-weight="bold" fill="#000" text-anchor="end" textLength="67.7" lengthAdjust="spacingAndGlyphs">10,000</text>
<text x="1503.6" y="1330.6" font-size="22" font-weight="bold" fill="#000" text-anchor="end" textLength="67.7" lengthAdjust="spacingAndGlyphs">15,000</text>
<text x="1503.6" y="1272.4" font-size="22" font-weight="bold" fill="#000" text-anchor="end" textLength="67.7" lengthAdjust="spacingAndGlyphs">20,000</text>
<text x="1503.6" y="1214.2" font-size="22" font-weight="bold" fill="#000" text-anchor="end" textLength="67.7" lengthAdjust="spacingAndGlyphs">25,000</text>
<text x="1503.6" y="1156.0" font-size="22" font-weight="bold" fill="#000" text-anchor="end" textLength="67.7" lengthAdjust="spacingAndGlyphs">30,000</text>
<polygon points="1528.0,1497.6 1528.00,1490.88 1538.60,1490.88 1549.19,1493.99 1559.79,1495.60 1570.39,1497.60 1580.98,1499.00 1591.58,1500.60 1602.18,1503.00 1612.77,1503.61 1623.37,1504.11 1633.97,1504.41 1644.56,1504.41 1655.16,1506.52 1665.76,1507.42 1676.35,1507.42 1686.95,1507.42 1697.55,1506.52 1708.14,1506.52 1718.74,1505.63 1729.34,1505.63 1739.93,1504.70 1750.53,1505.63 1761.13,1505.93 1771.72,1507.42 1782.32,1510.99 1792.92,1510.99 1803.51,1511.57 1814.11,1510.99 1824.71,1508.89 1835.30,1506.52 1845.90,1504.11 1856.50,1502.61 1867.09,1501.44 1877.69,1501.44 1888.29,1501.44 1898.88,1503.61 1909.48,1507.42 1920.08,1508.60 1930.67,1508.60 1941.27,1505.05 1951.87,1501.09 1962.46,1498.18 1973.06,1496.70 1983.66,1491.78 1994.25,1489.68 2004.85,1487.89 2015.45,1488.79 2026.04,1490.26 2036.64,1495.35 2047.24,1496.25 2057.83,1496.25 2068.43,1493.29 2079.03,1484.79 2089.62,1479.09 2100.22,1473.73 2110.82,1469.19 2121.41,1467.14 2132.01,1465.35 2142.61,1465.35 2153.20,1467.33 2163.80,1473.45 2174.39,1474.03 2184.99,1474.03 2195.59,1470.50 2206.18,1463.73 2216.78,1456.37 2227.38,1450.47 2237.97,1443.98 2248.57,1438.09 2259.17,1435.72 2269.76,1435.72 2280.36,1437.20 2290.96,1443.09 2301.55,1443.98 2312.15,1443.98 2322.75,1438.68 2333.34,1431.31 2343.94,1423.94 2354.54,1415.10 2365.13,1406.25 2375.73,1398.88 2386.33,1394.47 2396.92,1394.47 2407.52,1395.94 2418.12,1402.71 2428.71,1403.89 2439.31,1403.89 2449.91,1398.00 2460.50,1387.97 2471.10,1378.25 2481.70,1367.35 2492.29,1357.63 2502.89,1350.26 2513.49,1345.83 2524.08,1344.95 2534.68,1346.43 2545.28,1351.74 2555.87,1353.20 2566.47,1352.32 2577.07,1345.83 2587.66,1334.05 2598.26,1322.26 2608.86,1311.37 2619.45,1300.16 2630.05,1291.33 2640.65,1286.02 2651.24,1284.84 2661.84,1286.02 2672.44,1287.79 2683.03,1288.97 2693.63,1288.38 2704.23,1281.89 2714.82,1272.17 2725.42,1258.91 2736.02,1247.13 2746.61,1234.75 2757.21,1224.14 2767.81,1220.02 2778.40,1220.02 2789.00,1220.90 2789.0,1497.6" fill="#4DB3E6" stroke="#4DB3E6" stroke-width="1" stroke-linejoin="round"/>
<line x1="1528.0" y1="1497.6" x2="2789.5" y2="1497.6" stroke="#4A6DB8" stroke-width="2"/>
<line x1="1528.0" y1="1497.6" x2="1528.0" y2="1504.6" stroke="#4A6DB8" stroke-width="2"/>
<line x1="1538.6" y1="1497.6" x2="1538.6" y2="1502.6" stroke="#4A6DB8" stroke-width="2"/>
<line x1="1549.2" y1="1497.6" x2="1549.2" y2="1502.6" stroke="#4A6DB8" stroke-width="2"/>
<line x1="1559.8" y1="1497.6" x2="1559.8" y2="1504.6" stroke="#4A6DB8" stroke-width="2"/>
<line x1="1570.4" y1="1497.6" x2="1570.4" y2="1502.6" stroke="#4A6DB8" stroke-width="2"/>
<line x1="1581.0" y1="1497.6" x2="1581.0" y2="1502.6" stroke="#4A6DB8" stroke-width="2"/>
<line x1="1591.6" y1="1497.6" x2="1591.6" y2="1504.6" stroke="#4A6DB8" stroke-width="2"/>
<line x1="1602.2" y1="1497.6" x2="1602.2" y2="1502.6" stroke="#4A6DB8" stroke-width="2"/>
<line x1="1612.8" y1="1497.6" x2="1612.8" y2="1502.6" stroke="#4A6DB8" stroke-width="2"/>
<line x1="1623.4" y1="1497.6" x2="1623.4" y2="1504.6" stroke="#4A6DB8" stroke-width="2"/>
<line x1="1634.0" y1="1497.6" x2="1634.0" y2="1502.6" stroke="#4A6DB8" stroke-width="2"/>
<line x1="1644.6" y1="1497.6" x2="1644.6" y2="1502.6" stroke="#4A6DB8" stroke-width="2"/>
<line x1="1655.2" y1="1497.6" x2="1655.2" y2="1504.6" stroke="#4A6DB8" stroke-width="2"/>
<line x1="1665.8" y1="1497.6" x2="1665.8" y2="1502.6" stroke="#4A6DB8" stroke-width="2"/>
<line x1="1676.4" y1="1497.6" x2="1676.4" y2="1502.6" stroke="#4A6DB8" stroke-width="2"/>
<line x1="1686.9" y1="1497.6" x2="1686.9" y2="1504.6" stroke="#4A6DB8" stroke-width="2"/>
<line x1="1697.5" y1="1497.6" x2="1697.5" y2="1502.6" stroke="#4A6DB8" stroke-width="2"/>
<line x1="1708.1" y1="1497.6" x2="1708.1" y2="1502.6" stroke="#4A6DB8" stroke-width="2"/>
<line x1="1718.7" y1="1497.6" x2="1718.7" y2="1504.6" stroke="#4A6DB8" stroke-width="2"/>
<line x1="1729.3" y1="1497.6" x2="1729.3" y2="1502.6" stroke="#4A6DB8" stroke-width="2"/>
<line x1="1739.9" y1="1497.6" x2="1739.9" y2="1502.6" stroke="#4A6DB8" stroke-width="2"/>
<line x1="1750.5" y1="1497.6" x2="1750.5" y2="1504.6" stroke="#4A6DB8" stroke-width="2"/>
<line x1="1761.1" y1="1497.6" x2="1761.1" y2="1502.6" stroke="#4A6DB8" stroke-width="2"/>
<line x1="1771.7" y1="1497.6" x2="1771.7" y2="1502.6" stroke="#4A6DB8" stroke-width="2"/>
<line x1="1782.3" y1="1497.6" x2="1782.3" y2="1504.6" stroke="#4A6DB8" stroke-width="2"/>
<line x1="1792.9" y1="1497.6" x2="1792.9" y2="1502.6" stroke="#4A6DB8" stroke-width="2"/>
<line x1="1803.5" y1="1497.6" x2="1803.5" y2="1502.6" stroke="#4A6DB8" stroke-width="2"/>
<line x1="1814.1" y1="1497.6" x2="1814.1" y2="1504.6" stroke="#4A6DB8" stroke-width="2"/>
<line x1="1824.7" y1="1497.6" x2="1824.7" y2="1502.6" stroke="#4A6DB8" stroke-width="2"/>
<line x1="1835.3" y1="1497.6" x2="1835.3" y2="1502.6" stroke="#4A6DB8" stroke-width="2"/>
<line x1="1845.9" y1="1497.6" x2="1845.9" y2="1504.6" stroke="#4A6DB8" stroke-width="2"/>
<line x1="1856.5" y1="1497.6" x2="1856.5" y2="1502.6" stroke="#4A6DB8" stroke-width="2"/>
<line x1="1867.1" y1="1497.6" x2="1867.1" y2="1502.6" stroke="#4A6DB8" stroke-width="2"/>
<line x1="1877.7" y1="1497.6" x2="1877.7" y2="1504.6" stroke="#4A6DB8" stroke-width="2"/>
<line x1="1888.3" y1="1497.6" x2="1888.3" y2="1502.6" stroke="#4A6DB8" stroke-width="2"/>
<line x1="1898.9" y1="1497.6" x2="1898.9" y2="1502.6" stroke="#4A6DB8" stroke-width="2"/>
<line x1="1909.5" y1="1497.6" x2="1909.5" y2="1504.6" stroke="#4A6DB8" stroke-width="2"/>
<line x1="1920.1" y1="1497.6" x2="1920.1" y2="1502.6" stroke="#4A6DB8" stroke-width="2"/>
<line x1="1930.7" y1="1497.6" x2="1930.7" y2="1502.6" stroke="#4A6DB8" stroke-width="2"/>
<line x1="1941.3" y1="1497.6" x2="1941.3" y2="1504.6" stroke="#4A6DB8" stroke-width="2"/>
<line x1="1951.9" y1="1497.6" x2="1951.9" y2="1502.6" stroke="#4A6DB8" stroke-width="2"/>
<line x1="1962.5" y1="1497.6" x2="1962.5" y2="1502.6" stroke="#4A6DB8" stroke-width="2"/>
<line x1="1973.1" y1="1497.6" x2="1973.1" y2="1504.6" stroke="#4A6DB8" stroke-width="2"/>
<line x1="1983.7" y1="1497.6" x2="1983.7" y2="1502.6" stroke="#4A6DB8" stroke-width="2"/>
<line x1="1994.3" y1="1497.6" x2="1994.3" y2="1502.6" stroke="#4A6DB8" stroke-width="2"/>
<line x1="2004.8" y1="1497.6" x2="2004.8" y2="1504.6" stroke="#4A6DB8" stroke-width="2"/>
<line x1="2015.4" y1="1497.6" x2="2015.4" y2="1502.6" stroke="#4A6DB8" stroke-width="2"/>
<line x1="2026.0" y1="1497.6" x2="2026.0" y2="1502.6" stroke="#4A6DB8" stroke-width="2"/>
<line x1="2036.6" y1="1497.6" x2="2036.6" y2="1504.6" stroke="#4A6DB8" stroke-width="2"/>
<line x1="2047.2" y1="1497.6" x2="2047.2" y2="1502.6" stroke="#4A6DB8" stroke-width="2"/>
<line x1="2057.8" y1="1497.6" x2="2057.8" y2="1502.6" stroke="#4A6DB8" stroke-width="2"/>
<line x1="2068.4" y1="1497.6" x2="2068.4" y2="1504.6" stroke="#4A6DB8" stroke-width="2"/>
<line x1="2079.0" y1="1497.6" x2="2079.0" y2="1502.6" stroke="#4A6DB8" stroke-width="2"/>
<line x1="2089.6" y1="1497.6" x2="2089.6" y2="1502.6" stroke="#4A6DB8" stroke-width="2"/>
<line x1="2100.2" y1="1497.6" x2="2100.2" y2="1504.6" stroke="#4A6DB8" stroke-width="2"/>
<line x1="2110.8" y1="1497.6" x2="2110.8" y2="1502.6" stroke="#4A6DB8" stroke-width="2"/>
<line x1="2121.4" y1="1497.6" x2="2121.4" y2="1502.6" stroke="#4A6DB8" stroke-width="2"/>
<line x1="2132.0" y1="1497.6" x2="2132.0" y2="1504.6" stroke="#4A6DB8" stroke-width="2"/>
<line x1="2142.6" y1="1497.6" x2="2142.6" y2="1502.6" stroke="#4A6DB8" stroke-width="2"/>
<line x1="2153.2" y1="1497.6" x2="2153.2" y2="1502.6" stroke="#4A6DB8" stroke-width="2"/>
<line x1="2163.8" y1="1497.6" x2="2163.8" y2="1504.6" stroke="#4A6DB8" stroke-width="2"/>
<line x1="2174.4" y1="1497.6" x2="2174.4" y2="1502.6" stroke="#4A6DB8" stroke-width="2"/>
<line x1="2185.0" y1="1497.6" x2="2185.0" y2="1502.6" stroke="#4A6DB8" stroke-width="2"/>
<line x1="2195.6" y1="1497.6" x2="2195.6" y2="1504.6" stroke="#4A6DB8" stroke-width="2"/>
<line x1="2206.2" y1="1497.6" x2="2206.2" y2="1502.6" stroke="#4A6DB8" stroke-width="2"/>
<line x1="2216.8" y1="1497.6" x2="2216.8" y2="1502.6" stroke="#4A6DB8" stroke-width="2"/>
<line x1="2227.4" y1="1497.6" x2="2227.4" y2="1504.6" stroke="#4A6DB8" stroke-width="2"/>
<line x1="2238.0" y1="1497.6" x2="2238.0" y2="1502.6" stroke="#4A6DB8" stroke-width="2"/>
<line x1="2248.6" y1="1497.6" x2="2248.6" y2="1502.6" stroke="#4A6DB8" stroke-width="2"/>
<line x1="2259.2" y1="1497.6" x2="2259.2" y2="1504.6" stroke="#4A6DB8" stroke-width="2"/>
<line x1="2269.8" y1="1497.6" x2="2269.8" y2="1502.6" stroke="#4A6DB8" stroke-width="2"/>
<line x1="2280.4" y1="1497.6" x2="2280.4" y2="1502.6" stroke="#4A6DB8" stroke-width="2"/>
<line x1="2291.0" y1="1497.6" x2="2291.0" y2="1504.6" stroke="#4A6DB8" stroke-width="2"/>
<line x1="2301.6" y1="1497.6" x2="2301.6" y2="1502.6" stroke="#4A6DB8" stroke-width="2"/>
<line x1="2312.2" y1="1497.6" x2="2312.2" y2="1502.6" stroke="#4A6DB8" stroke-width="2"/>
<line x1="2322.7" y1="1497.6" x2="2322.7" y2="1504.6" stroke="#4A6DB8" stroke-width="2"/>
<line x1="2333.3" y1="1497.6" x2="2333.3" y2="1502.6" stroke="#4A6DB8" stroke-width="2"/>
<line x1="2343.9" y1="1497.6" x2="2343.9" y2="1502.6" stroke="#4A6DB8" stroke-width="2"/>
<line x1="2354.5" y1="1497.6" x2="2354.5" y2="1504.6" stroke="#4A6DB8" stroke-width="2"/>
<line x1="2365.1" y1="1497.6" x2="2365.1" y2="1502.6" stroke="#4A6DB8" stroke-width="2"/>
<line x1="2375.7" y1="1497.6" x2="2375.7" y2="1502.6" stroke="#4A6DB8" stroke-width="2"/>
<line x1="2386.3" y1="1497.6" x2="2386.3" y2="1504.6" stroke="#4A6DB8" stroke-width="2"/>
<line x1="2396.9" y1="1497.6" x2="2396.9" y2="1502.6" stroke="#4A6DB8" stroke-width="2"/>
<line x1="2407.5" y1="1497.6" x2="2407.5" y2="1502.6" stroke="#4A6DB8" stroke-width="2"/>
<line x1="2418.1" y1="1497.6" x2="2418.1" y2="1504.6" stroke="#4A6DB8" stroke-width="2"/>
<line x1="2428.7" y1="1497.6" x2="2428.7" y2="1502.6" stroke="#4A6DB8" stroke-width="2"/>
<line x1="2439.3" y1="1497.6" x2="2439.3" y2="1502.6" stroke="#4A6DB8" stroke-width="2"/>
<line x1="2449.9" y1="1497.6" x2="2449.9" y2="1504.6" stroke="#4A6DB8" stroke-width="2"/>
<line x1="2460.5" y1="1497.6" x2="2460.5" y2="1502.6" stroke="#4A6DB8" stroke-width="2"/>
<line x1="2471.1" y1="1497.6" x2="2471.1" y2="1502.6" stroke="#4A6DB8" stroke-width="2"/>
<line x1="2481.7" y1="1497.6" x2="2481.7" y2="1504.6" stroke="#4A6DB8" stroke-width="2"/>
<line x1="2492.3" y1="1497.6" x2="2492.3" y2="1502.6" stroke="#4A6DB8" stroke-width="2"/>
<line x1="2502.9" y1="1497.6" x2="2502.9" y2="1502.6" stroke="#4A6DB8" stroke-width="2"/>
<line x1="2513.5" y1="1497.6" x2="2513.5" y2="1504.6" stroke="#4A6DB8" stroke-width="2"/>
<line x1="2524.1" y1="1497.6" x2="2524.1" y2="1502.6" stroke="#4A6DB8" stroke-width="2"/>
<line x1="2534.7" y1="1497.6" x2="2534.7" y2="1502.6" stroke="#4A6DB8" stroke-width="2"/>
<line x1="2545.3" y1="1497.6" x2="2545.3" y2="1504.6" stroke="#4A6DB8" stroke-width="2"/>
<line x1="2555.9" y1="1497.6" x2="2555.9" y2="1502.6" stroke="#4A6DB8" stroke-width="2"/>
<line x1="2566.5" y1="1497.6" x2="2566.5" y2="1502.6" stroke="#4A6DB8" stroke-width="2"/>
<line x1="2577.1" y1="1497.6" x2="2577.1" y2="1504.6" stroke="#4A6DB8" stroke-width="2"/>
<line x1="2587.7" y1="1497.6" x2="2587.7" y2="1502.6" stroke="#4A6DB8" stroke-width="2"/>
<line x1="2598.3" y1="1497.6" x2="2598.3" y2="1502.6" stroke="#4A6DB8" stroke-width="2"/>
<line x1="2608.9" y1="1497.6" x2="2608.9" y2="1504.6" stroke="#4A6DB8" stroke-width="2"/>
<line x1="2619.5" y1="1497.6" x2="2619.5" y2="1502.6" stroke="#4A6DB8" stroke-width="2"/>
<line x1="2630.1" y1="1497.6" x2="2630.1" y2="1502.6" stroke="#4A6DB8" stroke-width="2"/>
<line x1="2640.6" y1="1497.6" x2="2640.6" y2="1504.6" stroke="#4A6DB8" stroke-width="2"/>
<line x1="2651.2" y1="1497.6" x2="2651.2" y2="1502.6" stroke="#4A6DB8" stroke-width="2"/>
<line x1="2661.8" y1="1497.6" x2="2661.8" y2="1502.6" stroke="#4A6DB8" stroke-width="2"/>
<line x1="2672.4" y1="1497.6" x2="2672.4" y2="1504.6" stroke="#4A6DB8" stroke-width="2"/>
<line x1="2683.0" y1="1497.6" x2="2683.0" y2="1502.6" stroke="#4A6DB8" stroke-width="2"/>
<line x1="2693.6" y1="1497.6" x2="2693.6" y2="1502.6" stroke="#4A6DB8" stroke-width="2"/>
<line x1="2704.2" y1="1497.6" x2="2704.2" y2="1504.6" stroke="#4A6DB8" stroke-width="2"/>
<line x1="2714.8" y1="1497.6" x2="2714.8" y2="1502.6" stroke="#4A6DB8" stroke-width="2"/>
<line x1="2725.4" y1="1497.6" x2="2725.4" y2="1502.6" stroke="#4A6DB8" stroke-width="2"/>
<line x1="2736.0" y1="1497.6" x2="2736.0" y2="1504.6" stroke="#4A6DB8" stroke-width="2"/>
<line x1="2746.6" y1="1497.6" x2="2746.6" y2="1502.6" stroke="#4A6DB8" stroke-width="2"/>
<line x1="2757.2" y1="1497.6" x2="2757.2" y2="1502.6" stroke="#4A6DB8" stroke-width="2"/>
<line x1="2767.8" y1="1497.6" x2="2767.8" y2="1504.6" stroke="#4A6DB8" stroke-width="2"/>
<line x1="2778.4" y1="1497.6" x2="2778.4" y2="1502.6" stroke="#4A6DB8" stroke-width="2"/>
<line x1="2789.0" y1="1497.6" x2="2789.0" y2="1502.6" stroke="#4A6DB8" stroke-width="2"/>
<text x="1533.5" y="1587.0" font-size="19" fill="#000" text-anchor="end" transform="rotate(-45 1533.5 1587.0)">Jan-26</text>
<text x="1565.3" y="1587.0" font-size="19" fill="#000" text-anchor="end" transform="rotate(-45 1565.3 1587.0)">Apr-26</text>
<text x="1597.1" y="1587.0" font-size="19" fill="#000" text-anchor="end" transform="rotate(-45 1597.1 1587.0)">Jul-26</text>
<text x="1628.9" y="1587.0" font-size="19" fill="#000" text-anchor="end" transform="rotate(-45 1628.9 1587.0)">Oct-26</text>
<text x="1660.7" y="1587.0" font-size="19" fill="#000" text-anchor="end" transform="rotate(-45 1660.7 1587.0)">Jan-27</text>
<text x="1692.4" y="1587.0" font-size="19" fill="#000" text-anchor="end" transform="rotate(-45 1692.4 1587.0)">Apr-27</text>
<text x="1724.2" y="1587.0" font-size="19" fill="#000" text-anchor="end" transform="rotate(-45 1724.2 1587.0)">Jul-27</text>
<text x="1756.0" y="1587.0" font-size="19" fill="#000" text-anchor="end" transform="rotate(-45 1756.0 1587.0)">Oct-27</text>
<text x="1787.8" y="1587.0" font-size="19" fill="#000" text-anchor="end" transform="rotate(-45 1787.8 1587.0)">Jan-28</text>
<text x="1819.6" y="1587.0" font-size="19" fill="#000" text-anchor="end" transform="rotate(-45 1819.6 1587.0)">Apr-28</text>
<text x="1851.4" y="1587.0" font-size="19" fill="#000" text-anchor="end" transform="rotate(-45 1851.4 1587.0)">Jul-28</text>
<text x="1883.2" y="1587.0" font-size="19" fill="#000" text-anchor="end" transform="rotate(-45 1883.2 1587.0)">Oct-28</text>
<text x="1915.0" y="1587.0" font-size="19" fill="#000" text-anchor="end" transform="rotate(-45 1915.0 1587.0)">Jan-29</text>
<text x="1946.8" y="1587.0" font-size="19" fill="#000" text-anchor="end" transform="rotate(-45 1946.8 1587.0)">Apr-29</text>
<text x="1978.6" y="1587.0" font-size="19" fill="#000" text-anchor="end" transform="rotate(-45 1978.6 1587.0)">Jul-29</text>
<text x="2010.3" y="1587.0" font-size="19" fill="#000" text-anchor="end" transform="rotate(-45 2010.3 1587.0)">Oct-29</text>
<text x="2042.1" y="1587.0" font-size="19" fill="#000" text-anchor="end" transform="rotate(-45 2042.1 1587.0)">Jan-30</text>
<text x="2073.9" y="1587.0" font-size="19" fill="#000" text-anchor="end" transform="rotate(-45 2073.9 1587.0)">Apr-30</text>
<text x="2105.7" y="1587.0" font-size="19" fill="#000" text-anchor="end" transform="rotate(-45 2105.7 1587.0)">Jul-30</text>
<text x="2137.5" y="1587.0" font-size="19" fill="#000" text-anchor="end" transform="rotate(-45 2137.5 1587.0)">Oct-30</text>
<text x="2169.3" y="1587.0" font-size="19" fill="#000" text-anchor="end" transform="rotate(-45 2169.3 1587.0)">Jan-31</text>
<text x="2201.1" y="1587.0" font-size="19" fill="#000" text-anchor="end" transform="rotate(-45 2201.1 1587.0)">Apr-31</text>
<text x="2232.9" y="1587.0" font-size="19" fill="#000" text-anchor="end" transform="rotate(-45 2232.9 1587.0)">Jul-31</text>
<text x="2264.7" y="1587.0" font-size="19" fill="#000" text-anchor="end" transform="rotate(-45 2264.7 1587.0)">Oct-31</text>
<text x="2296.5" y="1587.0" font-size="19" fill="#000" text-anchor="end" transform="rotate(-45 2296.5 1587.0)">Jan-32</text>
<text x="2328.2" y="1587.0" font-size="19" fill="#000" text-anchor="end" transform="rotate(-45 2328.2 1587.0)">Apr-32</text>
<text x="2360.0" y="1587.0" font-size="19" fill="#000" text-anchor="end" transform="rotate(-45 2360.0 1587.0)">Jul-32</text>
<text x="2391.8" y="1587.0" font-size="19" fill="#000" text-anchor="end" transform="rotate(-45 2391.8 1587.0)">Oct-32</text>
<text x="2423.6" y="1587.0" font-size="19" fill="#000" text-anchor="end" transform="rotate(-45 2423.6 1587.0)">Jan-33</text>
<text x="2455.4" y="1587.0" font-size="19" fill="#000" text-anchor="end" transform="rotate(-45 2455.4 1587.0)">Apr-33</text>
<text x="2487.2" y="1587.0" font-size="19" fill="#000" text-anchor="end" transform="rotate(-45 2487.2 1587.0)">Jul-33</text>
<text x="2519.0" y="1587.0" font-size="19" fill="#000" text-anchor="end" transform="rotate(-45 2519.0 1587.0)">Oct-33</text>
<text x="2550.8" y="1587.0" font-size="19" fill="#000" text-anchor="end" transform="rotate(-45 2550.8 1587.0)">Jan-34</text>
<text x="2582.6" y="1587.0" font-size="19" fill="#000" text-anchor="end" transform="rotate(-45 2582.6 1587.0)">Apr-34</text>
<text x="2614.4" y="1587.0" font-size="19" fill="#000" text-anchor="end" transform="rotate(-45 2614.4 1587.0)">Jul-34</text>
<text x="2646.1" y="1587.0" font-size="19" fill="#000" text-anchor="end" transform="rotate(-45 2646.1 1587.0)">Oct-34</text>
<text x="2677.9" y="1587.0" font-size="19" fill="#000" text-anchor="end" transform="rotate(-45 2677.9 1587.0)">Jan-35</text>
<text x="2709.7" y="1587.0" font-size="19" fill="#000" text-anchor="end" transform="rotate(-45 2709.7 1587.0)">Apr-35</text>
<text x="2741.5" y="1587.0" font-size="19" fill="#000" text-anchor="end" transform="rotate(-45 2741.5 1587.0)">Jul-35</text>
<text x="2773.3" y="1587.0" font-size="19" fill="#000" text-anchor="end" transform="rotate(-45 2773.3 1587.0)">Oct-35</text>
<rect x="2860.0" y="278.0" width="31.0" height="1392.0" fill="#161616"/>
<path d="M2869.5,296 L2875.7,287 L2882,296 Z" fill="#9a9a9a" stroke="#9a9a9a" stroke-width="1.5" stroke-linejoin="round"/>
<rect x="2870" y="304" width="12.2" height="660" rx="6.1" fill="#9b9b9b"/>
<path d="M2869.5,1654 L2875.7,1663 L2882,1654 Z" fill="#9a9a9a" stroke="#9a9a9a" stroke-width="1.5" stroke-linejoin="round"/>
<rect x="11.0" y="1670.0" width="2880.0" height="48.0" fill="#0a0a0a"/>
<rect x="11.0" y="1717.5" width="2880.0" height="33.5" fill="#141414"/>
<line x1="11.0" y1="1718.5" x2="2891.0" y2="1718.5" stroke="#3a3a3a" stroke-width="1"/>
<polyline points="53.5,1685.5 47,1692.7 53.5,1700" fill="none" stroke="#cfcfcf" stroke-width="1.5"/>
<polyline points="96,1685.5 102.5,1692.7 96,1700" fill="none" stroke="#cfcfcf" stroke-width="1.5"/>
<text x="190.0" y="1703.5" font-size="20" fill="#ffffff" textLength="82.7" lengthAdjust="spacingAndGlyphs">Contents</text>
<line x1="292.0" y1="1680.0" x2="292.0" y2="1707.5" stroke="#5c5c5c" stroke-width="1"/>
<line x1="433.4" y1="1680.0" x2="433.4" y2="1707.5" stroke="#5c5c5c" stroke-width="1"/>
<line x1="552.0" y1="1680.0" x2="552.0" y2="1707.5" stroke="#5c5c5c" stroke-width="1"/>
<line x1="723.7" y1="1680.0" x2="723.7" y2="1707.5" stroke="#5c5c5c" stroke-width="1"/>
<line x1="825.6" y1="1680.0" x2="825.6" y2="1707.5" stroke="#5c5c5c" stroke-width="1"/>
<line x1="925.6" y1="1680.0" x2="925.6" y2="1707.5" stroke="#5c5c5c" stroke-width="1"/>
<line x1="1051.6" y1="1680.0" x2="1051.6" y2="1707.5" stroke="#5c5c5c" stroke-width="1"/>
<line x1="1154.5" y1="1680.0" x2="1154.5" y2="1707.5" stroke="#5c5c5c" stroke-width="1"/>
<line x1="1209.7" y1="1680.0" x2="1209.7" y2="1707.5" stroke="#5c5c5c" stroke-width="1"/>
<line x1="1270.0" y1="1680.0" x2="1270.0" y2="1707.5" stroke="#5c5c5c" stroke-width="1"/>
<line x1="1331.5" y1="1680.0" x2="1331.5" y2="1707.5" stroke="#5c5c5c" stroke-width="1"/>
<line x1="1459.5" y1="1680.0" x2="1459.5" y2="1707.5" stroke="#5c5c5c" stroke-width="1"/>
<line x1="1587.6" y1="1680.0" x2="1587.6" y2="1707.5" stroke="#5c5c5c" stroke-width="1"/>
<line x1="1714.2" y1="1680.0" x2="1714.2" y2="1707.5" stroke="#5c5c5c" stroke-width="1"/>
<line x1="1775.7" y1="1680.0" x2="1775.7" y2="1707.5" stroke="#5c5c5c" stroke-width="1"/>
<line x1="1861.0" y1="1680.0" x2="1861.0" y2="1707.5" stroke="#5c5c5c" stroke-width="1"/>
<line x1="1958.4" y1="1680.0" x2="1958.4" y2="1707.5" stroke="#5c5c5c" stroke-width="1"/>
<line x1="2036.0" y1="1680.0" x2="2036.0" y2="1707.5" stroke="#5c5c5c" stroke-width="1"/>
<rect x="298.7" y="1676" width="128.3" height="35.2" rx="6" fill="#FDE96C"/>
<text x="362.9" y="1702.7" font-size="20" fill="#111" text-anchor="middle" textLength="99.5" lengthAdjust="spacingAndGlyphs">Dashboard</text>
<rect x="440" y="1676" width="106.0" height="35.2" rx="6" fill="#FDE96C"/>
<text x="493.0" y="1702.7" font-size="20" fill="#111" text-anchor="middle" textLength="78.0" lengthAdjust="spacingAndGlyphs">Revenue</text>
<rect x="559" y="1676" width="158.0" height="35.2" rx="6" fill="#FDE96C"/>
<text x="638.0" y="1702.7" font-size="20" fill="#111" text-anchor="middle" textLength="133.0" lengthAdjust="spacingAndGlyphs">COGS &amp; OPEX</text>
<rect x="729.9" y="1676" width="88.6" height="35.2" rx="6" fill="#FDE96C"/>
<text x="774.2" y="1702.7" font-size="20" fill="#111" text-anchor="middle" textLength="61.0" lengthAdjust="spacingAndGlyphs">Payroll</text>
<rect x="832" y="1676" width="86.5" height="35.2" rx="6" fill="#FDE96C"/>
<text x="875.2" y="1702.7" font-size="20" fill="#111" text-anchor="middle" textLength="60.4" lengthAdjust="spacingAndGlyphs">CAPEX</text>
<rect x="932" y="1676" width="112.8" height="35.2" rx="6" fill="#FDE96C"/>
<text x="988.4" y="1702.7" font-size="20" fill="#111" text-anchor="middle" textLength="85.4" lengthAdjust="spacingAndGlyphs">CapTable</text>
<rect x="1058" y="1676" width="90.0" height="35.2" rx="6" fill="#FDE96C"/>
<text x="1103.0" y="1702.7" font-size="20" fill="#111" text-anchor="middle" textLength="63.0" lengthAdjust="spacingAndGlyphs">Capital</text>
<rect x="1161" y="1676" width="41.6" height="35.2" rx="6" fill="#4DB3E6"/>
<text x="1181.8" y="1702.7" font-size="20" fill="#111" text-anchor="middle" textLength="14.6" lengthAdjust="spacingAndGlyphs">IS</text>
<rect x="1216" y="1676" width="48.0" height="35.2" rx="6" fill="#4DB3E6"/>
<text x="1240.0" y="1702.7" font-size="20" fill="#111" text-anchor="middle" textLength="22.0" lengthAdjust="spacingAndGlyphs">CF</text>
<rect x="1277" y="1676" width="47.0" height="35.2" rx="6" fill="#4DB3E6"/>
<text x="1300.5" y="1702.7" font-size="20" fill="#111" text-anchor="middle" textLength="22.4" lengthAdjust="spacingAndGlyphs">BS</text>
<rect x="1338" y="1676" width="114.6" height="35.2" rx="6" fill="#4DB3E6"/>
<text x="1395.3" y="1702.7" font-size="20" fill="#111" text-anchor="middle" textLength="87.0" lengthAdjust="spacingAndGlyphs">Scenarios</text>
<rect x="1465.8" y="1676" width="115.1" height="35.2" rx="6" fill="#4DB3E6"/>
<text x="1523.3" y="1702.7" font-size="20" fill="#111" text-anchor="middle" textLength="87.0" lengthAdjust="spacingAndGlyphs">Valuation</text>
<rect x="1594" y="1676" width="113.8" height="35.2" rx="6" fill="#4DB3E6"/>
<text x="1650.9" y="1702.7" font-size="20" fill="#111" text-anchor="middle" textLength="86.8" lengthAdjust="spacingAndGlyphs">Summary</text>
<rect x="1721" y="1676" width="47.7" height="35.2" rx="6" fill="#4DB3E6"/>
<text x="1744.8" y="1702.7" font-size="20" fill="#111" text-anchor="middle" textLength="21.3" lengthAdjust="spacingAndGlyphs">BE</text>
<rect x="1781.8" y="1676" width="72.2" height="35.2" rx="6" fill="#4DB3E6"/>
<text x="1817.9" y="1702.7" font-size="20" fill="#111" text-anchor="middle" textLength="45.7" lengthAdjust="spacingAndGlyphs">ROIC</text>
<rect x="1965" y="1676" width="63.0" height="35.2" rx="6" fill="#4DB3E6"/>
<text x="1996.5" y="1702.7" font-size="20" fill="#111" text-anchor="middle" textLength="36.8" lengthAdjust="spacingAndGlyphs">KPIs</text>
<defs><clipPath id="sc"><rect x="2042" y="1670" width="30" height="48"/></clipPath><linearGradient id="cg" x1="0" y1="0" x2="0" y2="1"><stop offset="0" stop-color="#ffffff"/><stop offset="0.55" stop-color="#f4f9fd"/><stop offset="1" stop-color="#cfe6f6"/></linearGradient></defs>
<g clip-path="url(#sc)"><rect x="2042" y="1676" width="70" height="35.2" rx="6" fill="#4DB3E6"/><text x="2050.0" y="1701.0" font-size="20" fill="#1a1a1a">Scroll</text></g>
<path d="M1860,1670 Q1867,1670 1867,1677 V1706 Q1867,1712 1873,1712 H1945.7 Q1951.7,1712 1951.7,1706 V1677 Q1951.7,1670 1958.7,1670 Z" fill="url(#cg)"/>
<text x="1909.3" y="1697.5" font-size="20" fill="#1a1a1a" text-anchor="middle" textLength="60.0" lengthAdjust="spacingAndGlyphs">Charts</text>
<rect x="1879.0" y="1705.0" width="61.0" height="3.0" fill="#1F8A4C" rx="1"/>
<circle cx="2088" cy="1692.5" r="2" fill="#e0e0e0"/><circle cx="2095" cy="1692.5" r="2" fill="#e0e0e0"/><circle cx="2102" cy="1692.5" r="2" fill="#e0e0e0"/>
<line x1="2134.5" y1="1692.5" x2="2151.5" y2="1692.5" stroke="#e0e0e0" stroke-width="1.5"/>
<line x1="2143.0" y1="1684.0" x2="2143.0" y2="1701.0" stroke="#e0e0e0" stroke-width="1.5"/>
<circle cx="2192" cy="1686" r="1.7" fill="#e0e0e0"/><circle cx="2192" cy="1693" r="1.7" fill="#e0e0e0"/><circle cx="2192" cy="1700" r="1.7" fill="#e0e0e0"/>
<rect x="2215.6" y="1679.5" width="642.4" height="26.5" rx="13" fill="#161616"/>
<path d="M2232.5,1686 L2225,1692.8 L2232.5,1699.6 Z" fill="#9a9a9a" stroke="#9a9a9a" stroke-linejoin="round"/>
<path d="M2843,1686 L2850.5,1692.8 L2843,1699.6 Z" fill="#9a9a9a" stroke="#9a9a9a" stroke-linejoin="round"/>
<rect x="2241.5" y="1687" width="560" height="11.7" rx="5.8" fill="#9a9a9a"/>
<text x="27.0" y="1742.5" font-size="18" fill="#e6e6e6" textLength="39.5" lengthAdjust="spacingAndGlyphs">Ready</text>
<rect x="99.5" y="1726" width="21" height="17" fill="none" stroke="#d8d8d8" stroke-width="1.5"/><path d="M99.5,1730.5 H120.5 M103,1734 H108 M103,1737.5 H107" stroke="#d8d8d8" stroke-width="1.3"/><circle cx="115" cy="1739" r="5.5" fill="#141414" stroke="#d8d8d8" stroke-width="1.5"/><circle cx="115" cy="1739" r="2.2" fill="#d8d8d8"/>
<circle cx="153.5" cy="1726" r="2.6" fill="none" stroke="#f0f0f0" stroke-width="1.8"/><path d="M147,1728.5 Q153.5,1733 160,1728.5 M153.5,1731.5 V1737.5 L149.5,1744.5 M153.5,1737.5 L156.5,1741 M158.5,1737.5 L167,1746 M167,1737.5 L158.5,1746" fill="none" stroke="#f0f0f0" stroke-width="1.8" stroke-linecap="round"/>
<text x="173.7" y="1742.0" font-size="17" font-weight="bold" fill="#ffffff" textLength="186.3" lengthAdjust="spacingAndGlyphs">Accessibility: Investigate</text>
<rect x="2445.0" y="1718.0" width="60.0" height="33.0" fill="#262626"/>
<rect x="2465" y="1726" width="19" height="17" fill="none" stroke="#e0e0e0" stroke-width="1.5"/><path d="M2471.3,1726 V1743 M2477.7,1726 V1743 M2465,1731.7 H2484 M2465,1737.3 H2484" stroke="#e0e0e0" stroke-width="1.3"/>
<rect x="2524.5" y="1725.5" width="21" height="18.5" fill="none" stroke="#e0e0e0" stroke-width="1.5"/><rect x="2529" y="1729.5" width="12" height="10.5" fill="none" stroke="#e0e0e0" stroke-width="1.2"/><path d="M2531,1732.5 H2539 M2531,1735 H2539 M2531,1737.5 H2539" stroke="#e0e0e0" stroke-width="1"/>
<rect x="2584.5" y="1725.5" width="21" height="18.5" fill="none" stroke="#e0e0e0" stroke-width="1.5"/><path d="M2591,1725.5 V1735 H2597 V1725.5" fill="none" stroke="#e0e0e0" stroke-width="1.5"/>
<line x1="2633.0" y1="1734.5" x2="2643.0" y2="1734.5" stroke="#d0d0d0" stroke-width="1.3"/>
<line x1="2653.0" y1="1734.5" x2="2801.0" y2="1734.5" stroke="#9a9a9a" stroke-width="1.3"/>
<rect x="2727.0" y="1726.0" width="7.0" height="17.0" fill="#b8b8b8"/>
<line x1="2809.0" y1="1734.5" x2="2821.0" y2="1734.5" stroke="#d0d0d0" stroke-width="1.3"/>
<line x1="2815.0" y1="1728.5" x2="2815.0" y2="1740.5" stroke="#d0d0d0" stroke-width="1.3"/>
<text x="2839.7" y="1742.0" font-size="17.5" fill="#e6e6e6" textLength="39.0" lengthAdjust="spacingAndGlyphs">110%</text>
</svg>
</body></html>
